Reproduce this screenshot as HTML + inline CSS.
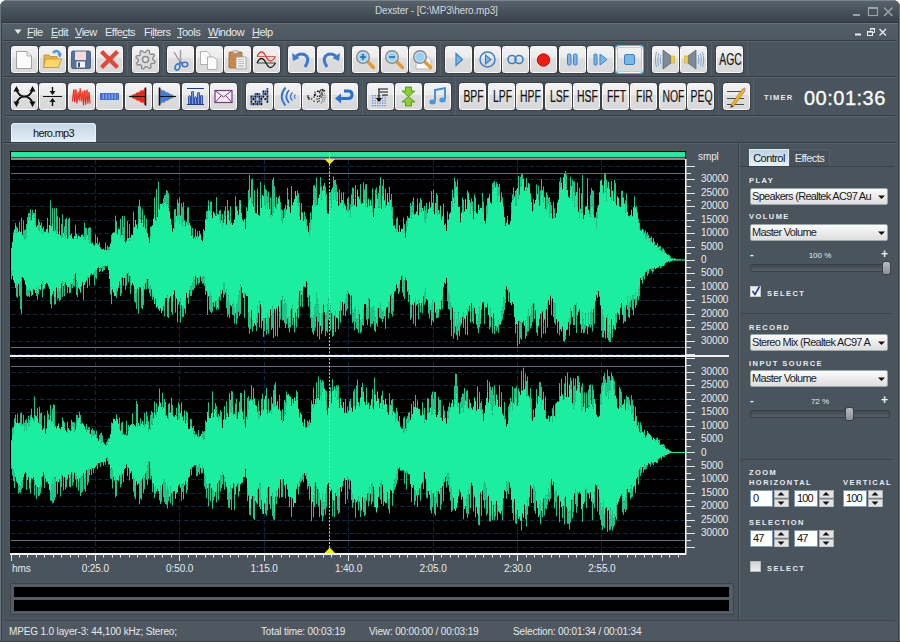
<!DOCTYPE html><html><head><meta charset="utf-8"><style>
*{margin:0;padding:0;box-sizing:border-box}
html,body{width:900px;height:642px;overflow:hidden;background:#fff}
body{position:relative;font-family:"Liberation Sans",sans-serif;}
.a{position:absolute}
#win{position:absolute;left:0;top:0;width:900px;height:642px;background:#4a545d;border-radius:7px 7px 0 0;overflow:hidden}
.title{left:0;top:0;width:900px;height:23px;background:linear-gradient(#7a848c 0px,#7a848c 1px,#57626b 1px,#48525a 50%,#3a434b);border-bottom:1px solid #2e353b}
.menu{left:0;top:23px;width:900px;height:18px;background:linear-gradient(#68727a 0px,#68727a 1px,#545e67 1px,#4d5760)}
.mi{position:absolute;top:25px;font-size:11px;color:#e4e8ec;line-height:14px;white-space:nowrap;letter-spacing:-0.5px}
.mi u{text-decoration:underline;text-underline-offset:1px}
.b{position:absolute;width:27px;height:27px;border-radius:2.5px;background:linear-gradient(#f2f2f2 0%,#ebebeb 45%,#dddddd 46%,#d9d9d9 100%);box-shadow:0 0 0 1px #394046;border:1px solid #fafafa}
.b svg{position:absolute;left:-1px;top:-1px}
.sep{position:absolute;width:1px;background:#3b4248;border-right:1px solid #566069}
.hl{position:absolute;height:2px;background:linear-gradient(#343b41 50%,#58626a 50%)}
.bt{position:absolute;left:-20px;top:0;width:67px;font-size:16px;color:#141414;-webkit-text-stroke:0.2px #141414;text-align:center;line-height:26px;transform:scaleX(0.65);white-space:nowrap}
.lbl{position:absolute;font-size:7.5px;font-weight:bold;color:#e8ecf0;letter-spacing:1.45px;line-height:10px}
.dd{position:absolute;height:17px;border-radius:2px;background:linear-gradient(#fcfcfc,#ececec 50%,#dedede);border:1px solid #9aa;font-size:11px;letter-spacing:-0.7px;color:#1a1a1a;line-height:15px;padding-left:1px;white-space:nowrap;overflow:hidden}
.sm{position:absolute;font-size:10px;letter-spacing:-0.1px;color:#e8eaec;line-height:12px;white-space:nowrap}
.st{position:absolute;top:625px;font-size:10px;letter-spacing:-0.15px;color:#e6e8ea;line-height:13px;white-space:nowrap}
</style></head><body><div id="win"><div class="a title"></div><div class="a" style="left:375px;top:4px;font-size:10px;letter-spacing:-0.17px;color:#d4d8dc;line-height:14px;white-space:nowrap">Dexster - [C:\MP3\hero.mp3]</div><div class="menu a"></div><svg class="a" style="left:850px;top:4px" width="46" height="16" viewBox="0 0 46 16"><rect x="3" y="10" width="7" height="2" fill="#9aa2a8"/><rect x="18.5" y="3.5" width="9" height="8" fill="none" stroke="#9aa2a8" stroke-width="1.2"/><rect x="18" y="3" width="10" height="2" fill="#9aa2a8"/><path d="M34 3.5 L42.5 12 M42.5 3.5 L34 12" stroke="#9aa2a8" stroke-width="1.6"/></svg><svg class="a" style="left:14px;top:29px" width="8" height="6"><path d="M0.5 0.5 H7.5 L4 5Z" fill="#e8ecf0"/></svg><div class="mi" style="left:27px"><u>F</u>ile</div><div class="mi" style="left:51px"><u>E</u>dit</div><div class="mi" style="left:75px"><u>V</u>iew</div><div class="mi" style="left:105px">Effe<u>c</u>ts</div><div class="mi" style="left:144px">Fi<u>l</u>ters</div><div class="mi" style="left:177px"><u>T</u>ools</div><div class="mi" style="left:208px"><u>W</u>indow</div><div class="mi" style="left:252px"><u>H</u>elp</div><svg class="a" style="left:850px;top:24px" width="46" height="16" viewBox="0 0 46 16"><rect x="5" y="9.5" width="6" height="2" fill="#e8ecf0"/><rect x="17.5" y="7.5" width="5" height="4" fill="none" stroke="#e8ecf0" stroke-width="1"/><rect x="17" y="7" width="6" height="1.6" fill="#e8ecf0"/><path d="M20.5 6.5 V4.5 H24.5 V8.5 H23" fill="none" stroke="#e8ecf0" stroke-width="1"/><rect x="20" y="4" width="5" height="1.5" fill="#e8ecf0"/><path d="M29.5 5 L36 11.5 M36 5 L29.5 11.5" stroke="#e8ecf0" stroke-width="1.3"/></svg><div class="hl" style="left:3px;top:40px;width:893px"></div><div class="hl" style="left:3px;top:76px;width:893px"></div><div class="hl" style="left:5px;top:115px;width:890px"></div><div class="b" style="left:11px;top:46px;"><svg width="27" height="27" viewBox="0 0 27 27"><path d="M5.5 5.5 H16 L20.5 10 V22.5 H5.5 Z" fill="#fbfbfb" stroke="#a0a0a0" stroke-width="1"/><path d="M16 5.5 V10 H20.5" fill="#e4e4e4" stroke="#a8a8a8" stroke-width="0.8"/></svg></div><div class="b" style="left:39px;top:46px;"><svg width="27" height="27" viewBox="0 0 27 27"><path d="M5 9 H10 L11.5 10.5 H18 V21 H5 Z" fill="#e8b44a" stroke="#b88a30" stroke-width="0.8"/><path d="M6.5 13 H22.5 L19.5 21.5 H4.5 Z" fill="#fbd76a" stroke="#c09038" stroke-width="0.8"/><path d="M14 7 Q18 2.5 21 8" fill="none" stroke="#4a98d8" stroke-width="2.6"/><path d="M18.5 8 L23 7.5 L21 12 Z" fill="#4a98d8"/></svg></div><div class="b" style="left:68px;top:46px;"><svg width="27" height="27" viewBox="0 0 27 27"><rect x="3.5" y="5" width="19" height="17.5" rx="1.5" fill="#52729a" stroke="#3a5478" stroke-width="0.8"/><rect x="7" y="5.5" width="11" height="8.5" fill="#f6dcd6"/><rect x="8.5" y="15.5" width="8.5" height="6" fill="#f4f4f4"/><rect x="10" y="16.5" width="2" height="4.5" fill="#3a5478"/></svg></div><div class="b" style="left:96px;top:46px;"><svg width="27" height="27" viewBox="0 0 27 27"><path d="M7 7 L20 20 M20 7 L7 20" stroke="#e2483a" stroke-width="4.2" stroke-linecap="square"/></svg></div><div class="b" style="left:132px;top:46px;"><svg width="27" height="27" viewBox="0 0 27 27"><polygon points="20.70,13.50 23.11,15.41 22.55,17.25 19.49,17.50 18.59,18.59 18.94,21.65 17.25,22.55 14.90,20.56 13.50,20.70 11.59,23.11 9.75,22.55 9.50,19.49 8.41,18.59 5.35,18.94 4.45,17.25 6.44,14.90 6.30,13.50 3.89,11.59 4.45,9.75 7.51,9.50 8.41,8.41 8.06,5.35 9.75,4.45 12.10,6.44 13.50,6.30 15.41,3.89 17.25,4.45 17.50,7.51 18.59,8.41 21.65,8.06 22.55,9.75 20.56,12.10" fill="#dcdcdc" stroke="#8c8c8c" stroke-width="1.3"/><circle cx="13.5" cy="13.5" r="3" fill="#e8e8e8" stroke="#8c8c8c" stroke-width="1.5"/></svg></div><div class="b" style="left:167px;top:46px;"><svg width="27" height="27" viewBox="0 0 27 27"><path d="M7 6 L15 19 M13.5 4 L13.5 18" stroke="#9a9a9a" stroke-width="1.4"/><ellipse cx="10.5" cy="21" rx="2.3" ry="3.2" fill="none" stroke="#3a78c8" stroke-width="1.6" transform="rotate(20 10.5 21)"/><ellipse cx="18" cy="18.5" rx="2.8" ry="2.2" fill="none" stroke="#3a78c8" stroke-width="1.6"/><path d="M13.5 16 L11.5 18.5 M14 16 L16 17.5" stroke="#3a78c8" stroke-width="1.6"/></svg></div><div class="b" style="left:196px;top:46px;"><svg width="27" height="27" viewBox="0 0 27 27"><path d="M4.5 5.5 H11 L14 8.5 V18.5 H4.5 Z" fill="#fafafa" stroke="#a8a8a8" stroke-width="0.9"/><path d="M11.5 11 H18 L21 14 V23.5 H11.5 Z" fill="#fafafa" stroke="#a8a8a8" stroke-width="0.9"/></svg></div><div class="b" style="left:224px;top:46px;"><svg width="27" height="27" viewBox="0 0 27 27"><rect x="5" y="6" width="13" height="16" rx="1" fill="#c88848" stroke="#9a6430" stroke-width="0.8"/><rect x="9" y="4.5" width="5" height="3" rx="1" fill="#d8d8d8" stroke="#909090" stroke-width="0.6"/><rect x="12" y="11" width="10" height="12" fill="#f4f4f4" stroke="#999" stroke-width="0.8"/><path d="M14 13.5 H20 M14 15.5 H20 M14 17.5 H20 M14 19.5 H20 M14 21 H20" stroke="#aaa" stroke-width="0.7"/></svg></div><div class="b" style="left:253px;top:46px;"><svg width="27" height="27" viewBox="0 0 27 27"><path d="M4 10.5 Q6.25 6 8.5 6 Q10.75 6 13 10.5 Q15.25 15 17.5 15 Q19.75 15 22.5 10.5" fill="none" stroke="#e83a2a" stroke-width="1.3"/><path d="M4 10.5 H22.5" stroke="#e83a2a" stroke-width="0.8"/><path d="M4 17 Q6.25 12.5 8.5 12.5 Q10.75 12.5 13 17 Q15.25 21.5 17.5 21.5 Q19.75 21.5 22.5 17" fill="none" stroke="#1a1a1a" stroke-width="1.3"/><path d="M4 17 H22.5" stroke="#1a1a1a" stroke-width="0.8"/></svg></div><div class="b" style="left:288px;top:46px;"><svg width="27" height="27" viewBox="0 0 27 27"><path d="M8 10 Q14 6 18.5 10 Q21.5 14 17 21" fill="none" stroke="#3a7ad0" stroke-width="3"/><path d="M4 7 L5 15 L11.5 12 Z" fill="#3a7ad0"/></svg></div><div class="b" style="left:317px;top:46px;"><svg width="27" height="27" viewBox="0 0 27 27"><path d="M19 10 Q13 6 8.5 10 Q5.5 14 10 21" fill="none" stroke="#3a7ad0" stroke-width="3"/><path d="M23 7 L22 15 L15.5 12 Z" fill="#3a7ad0"/></svg></div><div class="b" style="left:352px;top:46px;"><svg width="27" height="27" viewBox="0 0 27 27"><path d="M15.5 15.5 L21.5 21.5" stroke="#e89a28" stroke-width="3.2" stroke-linecap="round"/><circle cx="11" cy="11" r="6.3" fill="#bfe2f8" stroke="#8a8a8a" stroke-width="1.4"/><circle cx="11" cy="11" r="4.3" fill="#9ad0f2"/><path d="M8 11 H14 M11 8 V14" stroke="#2a68b0" stroke-width="1.6"/></svg></div><div class="b" style="left:381px;top:46px;"><svg width="27" height="27" viewBox="0 0 27 27"><path d="M15.5 15.5 L21.5 21.5" stroke="#e89a28" stroke-width="3.2" stroke-linecap="round"/><circle cx="11" cy="11" r="6.3" fill="#bfe2f8" stroke="#8a8a8a" stroke-width="1.4"/><circle cx="11" cy="11" r="4.3" fill="#9ad0f2"/><path d="M8 11 H14" stroke="#2a68b0" stroke-width="1.6"/></svg></div><div class="b" style="left:409px;top:46px;"><svg width="27" height="27" viewBox="0 0 27 27"><path d="M7 11 H19 L22 14 V23 H7 Z" fill="#f8f8f8" stroke="#aaa" stroke-width="0.8"/><path d="M15.5 15.5 L21.5 21.5" stroke="#e89a28" stroke-width="3.2" stroke-linecap="round"/><circle cx="11" cy="11" r="6.3" fill="#bfe2f8" stroke="#8a8a8a" stroke-width="1.4"/><circle cx="11" cy="11" r="4.3" fill="#9ad0f2"/></svg></div><div class="b" style="left:445px;top:46px;"><svg width="27" height="27" viewBox="0 0 27 27"><path d="M11 7.5 L17.5 13.5 L11 19.5 Z" fill="#7ab8ec" stroke="#3a80c8" stroke-width="1.2"/></svg></div><div class="b" style="left:474px;top:46px;"><svg width="27" height="27" viewBox="0 0 27 27"><circle cx="13.5" cy="13.5" r="7.5" fill="none" stroke="#3a80c8" stroke-width="1.5"/><path d="M11.5 9 L17 13.5 L11.5 18 Z" fill="#7ab8ec" stroke="#3a80c8" stroke-width="1.1"/></svg></div><div class="b" style="left:502px;top:46px;"><svg width="27" height="27" viewBox="0 0 27 27"><circle cx="10" cy="13.5" r="4" fill="none" stroke="#3a80c8" stroke-width="1.6"/><circle cx="17" cy="13.5" r="4" fill="none" stroke="#3a80c8" stroke-width="1.6"/></svg></div><div class="b" style="left:530px;top:46px;"><svg width="27" height="27" viewBox="0 0 27 27"><circle cx="13.5" cy="14" r="6.2" fill="#f01c10" stroke="#b80808" stroke-width="0.9"/></svg></div><div class="b" style="left:559px;top:46px;"><svg width="27" height="27" viewBox="0 0 27 27"><rect x="8.5" y="8" width="3.5" height="11" rx="1.2" fill="#7ab8ec" stroke="#3a80c8" stroke-width="1"/><rect x="14.5" y="8" width="3.5" height="11" rx="1.2" fill="#7ab8ec" stroke="#3a80c8" stroke-width="1"/></svg></div><div class="b" style="left:587px;top:46px;"><svg width="27" height="27" viewBox="0 0 27 27"><rect x="7" y="8" width="3" height="11" rx="1" fill="#7ab8ec" stroke="#3a80c8" stroke-width="1"/><path d="M13 8 L20 13.5 L13 19 Z" fill="#7ab8ec" stroke="#3a80c8" stroke-width="1"/></svg></div><div class="b" style="left:616px;top:46px;box-shadow:0 0 0 1px #49b8f0,inset 0 0 0 1px #9ad8f8"><svg width="27" height="27" viewBox="0 0 27 27"><rect x="8.5" y="8.5" width="10" height="10" rx="1.5" fill="#7ab8ec" stroke="#3a80c8" stroke-width="1"/></svg></div><div class="b" style="left:652px;top:46px;"><svg width="27" height="27" viewBox="0 0 27 27"><path d="M11 4 V23 L19 17 V10 Z" fill="#7a8a98" stroke="#55636e" stroke-width="0.7"/><rect x="19" y="10" width="3.5" height="7" fill="#f0d040" stroke="#c0a020" stroke-width="0.5"/><path d="M9 9 Q7.5 13.5 9 18 M6.8 7.5 Q4.8 13.5 6.8 19.5 M4.6 6 Q2.2 13.5 4.6 21" fill="none" stroke="#4a88c8" stroke-width="1" stroke-dasharray="1.3 0.5"/></svg></div><div class="b" style="left:680px;top:46px;"><svg width="27" height="27" viewBox="0 0 27 27"><path d="M16 4 V23 L8 17 V10 Z" fill="#7a8a98" stroke="#55636e" stroke-width="0.7"/><rect x="4.5" y="10" width="3.5" height="7" fill="#f0d040" stroke="#c0a020" stroke-width="0.5"/><path d="M18 9 Q19.5 13.5 18 18 M20.2 7.5 Q22.2 13.5 20.2 19.5 M22.4 6 Q24.8 13.5 22.4 21" fill="none" stroke="#4a88c8" stroke-width="1" stroke-dasharray="1.3 0.5"/></svg></div><div class="b" style="left:716px;top:46px;"><div class="bt">AGC</div></div><div class="sep" style="left:127px;top:42px;height:34px"></div><div class="sep" style="left:163px;top:42px;height:34px"></div><div class="sep" style="left:284px;top:42px;height:34px"></div><div class="sep" style="left:348px;top:42px;height:34px"></div><div class="sep" style="left:440px;top:42px;height:34px"></div><div class="sep" style="left:647px;top:42px;height:34px"></div><div class="sep" style="left:711px;top:42px;height:34px"></div><div class="sep" style="left:747px;top:42px;height:34px"></div><div class="b" style="left:11px;top:83px;"><svg width="27" height="27" viewBox="0 0 27 27"><path d="M5.5 7 C8.5 15.5 18.5 15.5 21.5 7 M5.5 20 C8.5 11.5 18.5 11.5 21.5 20" fill="none" stroke="#111" stroke-width="1.9"/><path d="M5.5 3 L2.5 8.5 H8.5Z M21.5 3 L18.5 8.5 H24.5Z M5.5 24 L2.5 18.5 H8.5Z M21.5 24 L18.5 18.5 H24.5Z" fill="#111"/></svg></div><div class="b" style="left:39px;top:83px;"><svg width="27" height="27" viewBox="0 0 27 27"><path d="M4 13.5 H23" stroke="#111" stroke-width="1.2"/><path d="M13.5 4 V11 M13.5 16 V23" stroke="#111" stroke-width="1.4"/><path d="M10.5 8 L16.5 8 L13.5 12Z M10.5 19 L16.5 19 L13.5 15Z" fill="#111"/></svg></div><div class="b" style="left:68px;top:83px;"><svg width="27" height="27" viewBox="0 0 27 27"><polyline points="4.5,18.4 5.6,7.0 6.7,19.1 7.8,6.6 8.9,20.5 10.0,9.5 11.1,17.2 12.2,5.4 13.3,18.5 14.4,8.6 15.5,22.5 16.6,7.4 17.7,21.6 18.8,7.3 19.9,20.6 21.0,9.1 22.1,20.5" fill="none" stroke="#e02a20" stroke-width="1.1"/><polyline points="5.0,15.2 6.1,6.1 7.2,14.9 8.3,7.1 9.4,14.7 10.5,8.7 11.6,18.0 12.7,8.8 13.8,16.7 14.9,7.9 16.0,16.0 17.1,7.8 18.2,15.1 19.3,6.6 20.4,14.7 21.5,8.8" fill="none" stroke="#f04a30" stroke-width="0.7"/></svg></div><div class="b" style="left:96px;top:83px;"><svg width="27" height="27" viewBox="0 0 27 27"><rect x="4.5" y="10.5" width="18" height="6" fill="#a8c4f0" stroke="#2a5ac8" stroke-width="0.8"/><rect x="5.0" y="11" width="0.8" height="5" fill="#1a50c0"/><rect x="6.5" y="11" width="0.8" height="5" fill="#1a50c0"/><rect x="8.0" y="11" width="0.8" height="5" fill="#1a50c0"/><rect x="9.5" y="11" width="0.8" height="5" fill="#1a50c0"/><rect x="11.0" y="11" width="0.8" height="5" fill="#1a50c0"/><rect x="12.5" y="11" width="0.8" height="5" fill="#1a50c0"/><rect x="14.0" y="11" width="0.8" height="5" fill="#1a50c0"/><rect x="15.5" y="11" width="0.8" height="5" fill="#1a50c0"/><rect x="17.0" y="11" width="0.8" height="5" fill="#1a50c0"/><rect x="18.5" y="11" width="0.8" height="5" fill="#1a50c0"/><rect x="20.0" y="11" width="0.8" height="5" fill="#1a50c0"/><rect x="21.5" y="11" width="0.8" height="5" fill="#1a50c0"/></svg></div><div class="b" style="left:125px;top:83px;"><svg width="27" height="27" viewBox="0 0 27 27"><polygon points="4.0,13.5 6.0,12.7 8.0,11.4 10.0,11.0 12.0,9.2 14.0,9.3 16.0,7.1 18.0,7.6 20.0,5.0 20.0,22.0 18.0,19.4 16.0,19.9 14.0,17.7 12.0,17.8 10.0,16.0 8.0,15.6 6.0,14.3 4.0,13.5" fill="#e8281c" stroke="#f0a080" stroke-width="0.5"/><path d="M20.5 4.5 V22.5" stroke="#111" stroke-width="1.6"/><path d="M4 13.5 H21" stroke="#111" stroke-width="1"/></svg></div><div class="b" style="left:153px;top:83px;"><svg width="27" height="27" viewBox="0 0 27 27"><polygon points="23.0,13.5 21.0,12.7 19.0,11.4 17.0,11.0 15.0,9.2 13.0,9.3 11.0,7.1 9.0,7.6 7.0,5.0 7.0,22.0 9.0,19.4 11.0,19.9 13.0,17.7 15.0,17.8 17.0,16.0 19.0,15.6 21.0,14.3 23.0,13.5" fill="#3a7ee8" stroke="#f0a070" stroke-width="0.5"/><path d="M6.5 4.5 V22.5" stroke="#111" stroke-width="1.6"/><path d="M6 13.5 H23" stroke="#111" stroke-width="1"/></svg></div><div class="b" style="left:182px;top:83px;"><svg width="27" height="27" viewBox="0 0 27 27"><path d="M5 5.5 H22 M5 21.5 H22" stroke="#1a3a90" stroke-width="1.1"/><path d="M6.5 21 V14 Q7.5 11 8.5 14 V21 M9.5 21 V9 Q10.5 7 11.5 9 V21 M12.5 21 V15 Q13.5 12 14.5 15 V21 M15.5 21 V10 Q16.5 8 17.5 10 V21 M18.5 21 V13 Q19.5 11 20.5 13 V21" fill="#7a9ae0" stroke="#2a4aa8" stroke-width="0.9"/></svg></div><div class="b" style="left:210px;top:83px;"><svg width="27" height="27" viewBox="0 0 27 27"><rect x="5" y="7.5" width="17" height="12" fill="#f4eef4" stroke="#7a3a80" stroke-width="1.2"/><path d="M5 7.5 L13.5 14 L22 7.5 M5 19.5 L11 13 M22 19.5 L16 13" fill="none" stroke="#7a3a80" stroke-width="1"/></svg></div><div class="b" style="left:246px;top:83px;"><svg width="27" height="27" viewBox="0 0 27 27"><rect x="4.5" y="12.5" width="1.8" height="2.2" fill="#141414"/><rect x="4.5" y="15.0" width="1.8" height="2.2" fill="#2a60c8"/><rect x="4.5" y="17.5" width="1.8" height="2.2" fill="#141414"/><rect x="4.5" y="20.0" width="1.8" height="2.2" fill="#2a60c8"/><rect x="6.5" y="12.5" width="1.8" height="2.2" fill="#2a60c8"/><rect x="6.5" y="15.0" width="1.8" height="2.2" fill="#141414"/><rect x="6.5" y="20.0" width="1.8" height="2.2" fill="#141414"/><rect x="8.5" y="10.0" width="1.8" height="2.2" fill="#2a60c8"/><rect x="8.5" y="12.5" width="1.8" height="2.2" fill="#141414"/><rect x="8.5" y="15.0" width="1.8" height="2.2" fill="#2a60c8"/><rect x="8.5" y="17.5" width="1.8" height="2.2" fill="#141414"/><rect x="8.5" y="20.0" width="1.8" height="2.2" fill="#2a60c8"/><rect x="10.5" y="10.0" width="1.8" height="2.2" fill="#141414"/><rect x="10.5" y="12.5" width="1.8" height="2.2" fill="#2a60c8"/><rect x="10.5" y="17.5" width="1.8" height="2.2" fill="#2a60c8"/><rect x="10.5" y="20.0" width="1.8" height="2.2" fill="#141414"/><rect x="12.5" y="10.0" width="1.8" height="2.2" fill="#2a60c8"/><rect x="12.5" y="12.5" width="1.8" height="2.2" fill="#141414"/><rect x="12.5" y="15.0" width="1.8" height="2.2" fill="#2a60c8"/><rect x="12.5" y="17.5" width="1.8" height="2.2" fill="#141414"/><rect x="12.5" y="20.0" width="1.8" height="2.2" fill="#2a60c8"/><rect x="14.5" y="12.5" width="1.8" height="2.2" fill="#2a60c8"/><rect x="14.5" y="15.0" width="1.8" height="2.2" fill="#141414"/><rect x="14.5" y="17.5" width="1.8" height="2.2" fill="#2a60c8"/><rect x="14.5" y="20.0" width="1.8" height="2.2" fill="#141414"/><rect x="16.5" y="7.5" width="1.8" height="2.2" fill="#141414"/><rect x="16.5" y="10.0" width="1.8" height="2.2" fill="#2a60c8"/><rect x="16.5" y="12.5" width="1.8" height="2.2" fill="#141414"/><rect x="18.5" y="7.5" width="1.8" height="2.2" fill="#2a60c8"/><rect x="18.5" y="10.0" width="1.8" height="2.2" fill="#141414"/><rect x="18.5" y="15.0" width="1.8" height="2.2" fill="#141414"/><rect x="20.5" y="5.0" width="1.8" height="2.2" fill="#2a60c8"/><rect x="20.5" y="7.5" width="1.8" height="2.2" fill="#141414"/><rect x="20.5" y="10.0" width="1.8" height="2.2" fill="#2a60c8"/><rect x="20.5" y="12.5" width="1.8" height="2.2" fill="#141414"/><rect x="20.5" y="15.0" width="1.8" height="2.2" fill="#2a60c8"/><rect x="20.5" y="17.5" width="1.8" height="2.2" fill="#141414"/></svg></div><div class="b" style="left:274px;top:83px;"><svg width="27" height="27" viewBox="0 0 27 27"><path d="M11.5 4.5 Q4 13.5 11.5 22.5" fill="none" stroke="#3a78d0" stroke-width="2"/><path d="M15 7 Q9.5 13.5 15 20" fill="none" stroke="#3a78d0" stroke-width="1.7"/><path d="M18.5 9.5 Q14.5 13.5 18.5 17.5" fill="none" stroke="#3a78d0" stroke-width="1.4"/><path d="M21.5 11.5 Q19 13.5 21.5 15.5" fill="none" stroke="#3a78d0" stroke-width="1.1"/></svg></div><div class="b" style="left:302px;top:83px;"><svg width="27" height="27" viewBox="0 0 27 27"><rect x="12.9" y="11.3" width="1.2" height="1.2" fill="#111"/><rect x="5.1" y="13.5" width="1.2" height="1.2" fill="#111"/><rect x="20.3" y="6.4" width="1.2" height="1.2" fill="#111"/><rect x="14.4" y="15.5" width="1.2" height="1.2" fill="#111"/><rect x="17.0" y="12.7" width="1.2" height="1.2" fill="#111"/><rect x="17.3" y="7.7" width="1.2" height="1.2" fill="#111"/><rect x="15.0" y="18.2" width="1.2" height="1.2" fill="#111"/><rect x="11.5" y="17.7" width="1.2" height="1.2" fill="#111"/><rect x="16.5" y="17.3" width="1.2" height="1.2" fill="#111"/><rect x="19.9" y="5.9" width="1.2" height="1.2" fill="#111"/><rect x="11.4" y="13.4" width="1.2" height="1.2" fill="#111"/><rect x="5.4" y="12.2" width="1.2" height="1.2" fill="#111"/><rect x="20.4" y="6.9" width="1.2" height="1.2" fill="#111"/><rect x="6.4" y="14.2" width="1.2" height="1.2" fill="#111"/><rect x="12.1" y="11.8" width="1.2" height="1.2" fill="#111"/><rect x="14.9" y="7.9" width="1.2" height="1.2" fill="#111"/><rect x="5.9" y="14.4" width="1.2" height="1.2" fill="#111"/><rect x="15.3" y="7.5" width="1.2" height="1.2" fill="#111"/><rect x="22.0" y="7.1" width="1.2" height="1.2" fill="#111"/><rect x="9.0" y="15.4" width="1.2" height="1.2" fill="#111"/><rect x="16.5" y="15.0" width="1.2" height="1.2" fill="#111"/><rect x="18.2" y="6.5" width="1.2" height="1.2" fill="#111"/><rect x="14.9" y="12.7" width="1.2" height="1.2" fill="#111"/><rect x="18.6" y="10.6" width="1.2" height="1.2" fill="#111"/><rect x="12.4" y="8.6" width="1.2" height="1.2" fill="#111"/><rect x="12.5" y="10.5" width="1.2" height="1.2" fill="#111"/><rect x="6.5" y="15.7" width="1.2" height="1.2" fill="#111"/><rect x="18.7" y="13.5" width="1.2" height="1.2" fill="#111"/><rect x="17.1" y="9.2" width="1.2" height="1.2" fill="#111"/><rect x="17.5" y="12.2" width="1.2" height="1.2" fill="#111"/><rect x="11.8" y="11.3" width="1.2" height="1.2" fill="#111"/><rect x="19.6" y="11.3" width="1.2" height="1.2" fill="#111"/><rect x="16.3" y="7.9" width="1.2" height="1.2" fill="#111"/><rect x="19.3" y="9.4" width="1.2" height="1.2" fill="#111"/><path d="M19 6 Q23 13.5 19 21 M21.5 8 Q24.5 13.5 21.5 19" fill="none" stroke="#222" stroke-width="0.8" stroke-dasharray="1 1"/></svg></div><div class="b" style="left:331px;top:83px;"><svg width="27" height="27" viewBox="0 0 27 27"><path d="M9 15.5 H17 Q21 15.5 21 11.5 Q21 8 17 8 H13" fill="none" stroke="#2a70d0" stroke-width="3"/><path d="M4 15.5 L10 10.5 V20.5 Z" fill="#2a70d0"/></svg></div><div class="b" style="left:367px;top:83px;"><svg width="27" height="27" viewBox="0 0 27 27"><rect x="5.0" y="12.0" width="1.3" height="1.3" fill="#6a8ad0"/><rect x="5.0" y="14.5" width="1.3" height="1.3" fill="#6a8ad0"/><rect x="5.0" y="17.0" width="1.3" height="1.3" fill="#6a8ad0"/><rect x="5.0" y="19.5" width="1.3" height="1.3" fill="#6a8ad0"/><rect x="5.0" y="22.0" width="1.3" height="1.3" fill="#6a8ad0"/><rect x="7.5" y="12.0" width="1.3" height="1.3" fill="#6a8ad0"/><rect x="7.5" y="14.5" width="1.3" height="1.3" fill="#6a8ad0"/><rect x="7.5" y="17.0" width="1.3" height="1.3" fill="#6a8ad0"/><rect x="7.5" y="19.5" width="1.3" height="1.3" fill="#6a8ad0"/><rect x="7.5" y="22.0" width="1.3" height="1.3" fill="#6a8ad0"/><rect x="10.0" y="12.0" width="1.3" height="1.3" fill="#6a8ad0"/><rect x="10.0" y="14.5" width="1.3" height="1.3" fill="#6a8ad0"/><rect x="10.0" y="17.0" width="1.3" height="1.3" fill="#6a8ad0"/><rect x="10.0" y="19.5" width="1.3" height="1.3" fill="#6a8ad0"/><rect x="10.0" y="22.0" width="1.3" height="1.3" fill="#6a8ad0"/><rect x="12.5" y="12.0" width="1.3" height="1.3" fill="#6a8ad0"/><rect x="12.5" y="14.5" width="1.3" height="1.3" fill="#6a8ad0"/><rect x="12.5" y="17.0" width="1.3" height="1.3" fill="#6a8ad0"/><rect x="12.5" y="19.5" width="1.3" height="1.3" fill="#6a8ad0"/><rect x="12.5" y="22.0" width="1.3" height="1.3" fill="#6a8ad0"/><rect x="15.0" y="12.0" width="1.3" height="1.3" fill="#6a8ad0"/><rect x="15.0" y="14.5" width="1.3" height="1.3" fill="#6a8ad0"/><rect x="15.0" y="17.0" width="1.3" height="1.3" fill="#6a8ad0"/><rect x="15.0" y="19.5" width="1.3" height="1.3" fill="#6a8ad0"/><rect x="15.0" y="22.0" width="1.3" height="1.3" fill="#6a8ad0"/><rect x="17.5" y="12.0" width="1.3" height="1.3" fill="#6a8ad0"/><rect x="17.5" y="14.5" width="1.3" height="1.3" fill="#6a8ad0"/><rect x="17.5" y="17.0" width="1.3" height="1.3" fill="#6a8ad0"/><rect x="17.5" y="19.5" width="1.3" height="1.3" fill="#6a8ad0"/><rect x="17.5" y="22.0" width="1.3" height="1.3" fill="#6a8ad0"/><path d="M11 6 H21 M13 9 H21 M15 12 H21 M12 6 V16" stroke="#111" stroke-width="1.2"/><path d="M9 15 L15 15 L12 19Z" fill="#111"/></svg></div><div class="b" style="left:395px;top:83px;"><svg width="27" height="27" viewBox="0 0 27 27"><path d="M10.5 4 H16.5 V8 H20 L13.5 13.5 L7 8 H10.5Z M10.5 23 H16.5 V19 H20 L13.5 13.5 L7 19 H10.5Z" fill="#8ad030" stroke="#4a8a10" stroke-width="0.8"/></svg></div><div class="b" style="left:424px;top:83px;"><svg width="27" height="27" viewBox="0 0 27 27"><path d="M11 18 V7 L21 5 V16" fill="none" stroke="#3a88d8" stroke-width="1.8"/><ellipse cx="8.5" cy="19" rx="3.2" ry="2.5" fill="#4a98e0"/><ellipse cx="18.5" cy="17" rx="3.2" ry="2.5" fill="#4a98e0"/></svg></div><div class="b" style="left:459px;top:83px;"><div class="bt">BPF</div></div><div class="b" style="left:488px;top:83px;"><div class="bt">LPF</div></div><div class="b" style="left:516px;top:83px;"><div class="bt">HPF</div></div><div class="b" style="left:545px;top:83px;"><div class="bt">LSF</div></div><div class="b" style="left:573px;top:83px;"><div class="bt">HSF</div></div><div class="b" style="left:602px;top:83px;"><div class="bt">FFT</div></div><div class="b" style="left:630px;top:83px;"><div class="bt">FIR</div></div><div class="b" style="left:659px;top:83px;"><div class="bt">NOF</div></div><div class="b" style="left:687px;top:83px;"><div class="bt">PEQ</div></div><div class="b" style="left:723px;top:83px;"><svg width="27" height="27" viewBox="0 0 27 27"><path d="M4 8.5 H21 M4 15.5 H21 M4 21.5 H21" stroke="#383838" stroke-width="0.9"/><path d="M8 22 L19.5 6 L22 7.8 L10.5 23.5 Z" fill="#f0b428" stroke="#a06a10" stroke-width="0.6"/><path d="M8 22 L10.5 23.5 L7.5 25Z" fill="#333"/><path d="M19.5 6 L22 7.8 L23 5.5 L21 4.2Z" fill="#d88ab0"/></svg></div><div class="sep" style="left:241px;top:78px;height:37px"></div><div class="sep" style="left:362px;top:78px;height:37px"></div><div class="sep" style="left:455px;top:78px;height:37px"></div><div class="sep" style="left:718px;top:78px;height:37px"></div><div class="sep" style="left:753px;top:78px;height:37px"></div><div class="a" style="left:764px;top:93px;font-size:7.5px;font-weight:bold;letter-spacing:1.2px;color:#e8ecf0;line-height:10px">TIMER</div><div class="a" style="left:804px;top:87px;font-size:20px;letter-spacing:0.5px;-webkit-text-stroke:0.35px #fbfbf6;color:#fbfbf6;line-height:22px">00:01:36</div><div class="a" style="left:11px;top:123px;width:85px;height:20px;border-radius:4px 4px 0 0;background:linear-gradient(#c4d6e4,#d4e2ee 50%,#e6f0f8);box-shadow:inset 0 0 0 1px #e8f0f6"></div><div class="a" style="left:11px;top:126px;width:85px;text-align:center;font-size:11px;letter-spacing:-0.7px;color:#111;line-height:14px">hero.mp3</div><div class="hl" style="left:3px;top:142px;width:893px"></div><div class="a" style="left:738px;top:143px;width:1px;height:477px;background:#3b4248"></div><div class="a" style="left:739px;top:143px;width:1px;height:477px;background:#566069"></div><div class="a" style="left:10px;top:151px;width:676px;height:403px;background:#000"></div><div class="a" style="left:11px;top:152px;width:674px;height:5px;background:linear-gradient(#1ee49a,#22f0a4 50%,#1ee09a)"></div><div class="a" style="left:11px;top:157px;width:674px;height:1px;background:#0c5a3c"></div><div class="a" style="left:11px;top:158px;width:674px;height:2px;background:linear-gradient(#9a8c94,#8a8088)"></div><div class="a" style="left:329px;top:152px;width:1px;height:7px;background:#c8e020"></div><svg class="a" style="left:0;top:0" width="900" height="642" viewBox="0 0 900 642"><defs><clipPath id="wc"><rect x="11" y="160" width="674" height="393"/></clipPath></defs><g clip-path="url(#wc)"><path d="M11 166.5 H685 M11 179.5 H685 M11 193.5 H685 M11 206.5 H685 M11 220.5 H685 M11 233.5 H685 M11 247.5 H685 M11 260.5 H685 M11 273.5 H685 M11 287.5 H685 M11 300.5 H685 M11 314.5 H685 M11 327.5 H685 M11 341.5 H685 M11 354.5 H685 M11 358.5 H685 M11 372.5 H685 M11 385.5 H685 M11 399.5 H685 M11 412.5 H685 M11 426.5 H685 M11 439.5 H685 M11 452.5 H685 M11 466.5 H685 M11 479.5 H685 M11 493.5 H685 M11 506.5 H685 M11 520.5 H685 M11 533.5 H685 M11 547.5 H685 M95.5 160 V553 M179.5 160 V553 M264.5 160 V553 M348.5 160 V553 M433.5 160 V553 M517.5 160 V553 M601.5 160 V553" stroke="#0c2844" stroke-width="1" stroke-dasharray="4.6 2.6" fill="none"/><path d="M11 260.0 L11 248.1 L12 248.1 L12 242.0 L13 242.0 L13 234.9 L14 234.9 L14 229.6 L15 229.6 L15 224.7 L16 224.7 L16 232.8 L17 232.8 L17 228.1 L18 228.1 L18 231.7 L19 231.7 L19 230.3 L20 230.3 L20 231.9 L21 231.9 L21 231.1 L22 231.1 L22 234.7 L23 234.7 L23 236.8 L24 236.8 L24 238.8 L25 238.8 L25 238.8 L26 238.8 L26 236.6 L27 236.6 L27 225.1 L28 225.1 L28 219.9 L29 219.9 L29 216.7 L30 216.7 L30 220.6 L31 220.6 L31 220.1 L32 220.1 L32 214.7 L33 214.7 L33 213.2 L34 213.2 L34 217.7 L35 217.7 L35 224.3 L36 224.3 L36 226.7 L37 226.7 L37 225.2 L38 225.2 L38 229.9 L39 229.9 L39 230.4 L40 230.4 L40 225.3 L41 225.3 L41 233.2 L42 233.2 L42 228.5 L43 228.5 L43 234.0 L44 234.0 L44 231.5 L45 231.5 L45 231.8 L46 231.8 L46 229.0 L47 229.0 L47 229.0 L48 229.0 L48 232.6 L49 232.6 L49 225.1 L50 225.1 L50 224.4 L51 224.4 L51 226.2 L52 226.2 L52 223.1 L53 223.1 L53 231.1 L54 231.1 L54 232.1 L55 232.1 L55 230.3 L56 230.3 L56 233.5 L57 233.5 L57 230.7 L58 230.7 L58 234.3 L59 234.3 L59 229.4 L60 229.4 L60 235.3 L61 235.3 L61 237.7 L62 237.7 L62 236.7 L63 236.7 L63 232.8 L64 232.8 L64 236.1 L65 236.1 L65 237.5 L66 237.5 L66 234.8 L67 234.8 L67 239.1 L68 239.1 L68 236.5 L69 236.5 L69 235.1 L70 235.1 L70 235.3 L71 235.3 L71 233.8 L72 233.8 L72 238.2 L73 238.2 L73 238.7 L74 238.7 L74 236.1 L75 236.1 L75 235.5 L76 235.5 L76 233.9 L77 233.9 L77 238.7 L78 238.7 L78 235.2 L79 235.2 L79 236.2 L80 236.2 L80 236.9 L81 236.9 L81 234.8 L82 234.8 L82 234.4 L83 234.4 L83 236.4 L84 236.4 L84 240.1 L85 240.1 L85 240.0 L86 240.0 L86 235.6 L87 235.6 L87 234.7 L88 234.7 L88 240.0 L89 240.0 L89 242.7 L90 242.7 L90 241.1 L91 241.1 L91 243.6 L92 243.6 L92 242.7 L93 242.7 L93 244.7 L94 244.7 L94 245.4 L95 245.4 L95 243.2 L96 243.2 L96 243.3 L97 243.3 L97 244.6 L98 244.6 L98 244.2 L99 244.2 L99 246.7 L100 246.7 L100 247.6 L101 247.6 L101 248.9 L102 248.9 L102 249.6 L103 249.6 L103 248.7 L104 248.7 L104 249.7 L105 249.7 L105 246.7 L106 246.7 L106 250.2 L107 250.2 L107 249.1 L108 249.1 L108 249.7 L109 249.7 L109 249.6 L110 249.6 L110 243.5 L111 243.5 L111 241.6 L112 241.6 L112 233.3 L113 233.3 L113 232.3 L114 232.3 L114 232.5 L115 232.5 L115 229.1 L116 229.1 L116 233.1 L117 233.1 L117 234.5 L118 234.5 L118 228.6 L119 228.6 L119 229.2 L120 229.2 L120 236.8 L121 236.8 L121 234.7 L122 234.7 L122 234.8 L123 234.8 L123 238.0 L124 238.0 L124 240.4 L125 240.4 L125 242.4 L126 242.4 L126 240.8 L127 240.8 L127 237.5 L128 237.5 L128 238.1 L129 238.1 L129 240.7 L130 240.7 L130 237.4 L131 237.4 L131 234.5 L132 234.5 L132 235.1 L133 235.1 L133 230.1 L134 230.1 L134 227.1 L135 227.1 L135 220.0 L136 220.0 L136 224.5 L137 224.5 L137 228.7 L138 228.7 L138 223.1 L139 223.1 L139 218.8 L140 218.8 L140 218.4 L141 218.4 L141 223.1 L142 223.1 L142 219.6 L143 219.6 L143 226.8 L144 226.8 L144 226.1 L145 226.1 L145 228.5 L146 228.5 L146 232.0 L147 232.0 L147 233.3 L148 233.3 L148 237.2 L149 237.2 L149 242.8 L150 242.8 L150 237.1 L151 237.1 L151 226.4 L152 226.4 L152 225.3 L153 225.3 L153 218.5 L154 218.5 L154 213.7 L155 213.7 L155 219.7 L156 219.7 L156 220.4 L157 220.4 L157 216.9 L158 216.9 L158 206.9 L159 206.9 L159 209.6 L160 209.6 L160 204.0 L161 204.0 L161 204.1 L162 204.1 L162 203.2 L163 203.2 L163 205.5 L164 205.5 L164 202.8 L165 202.8 L165 202.1 L166 202.1 L166 204.9 L167 204.9 L167 203.4 L168 203.4 L168 207.7 L169 207.7 L169 211.3 L170 211.3 L170 218.5 L171 218.5 L171 224.4 L172 224.4 L172 231.5 L173 231.5 L173 228.0 L174 228.0 L174 228.4 L175 228.4 L175 221.5 L176 221.5 L176 216.0 L177 216.0 L177 221.1 L178 221.1 L178 214.4 L179 214.4 L179 223.3 L180 223.3 L180 215.6 L181 215.6 L181 224.0 L182 224.0 L182 225.7 L183 225.7 L183 221.9 L184 221.9 L184 220.6 L185 220.6 L185 226.3 L186 226.3 L186 221.7 L187 221.7 L187 223.7 L188 223.7 L188 224.7 L189 224.7 L189 222.9 L190 222.9 L190 225.6 L191 225.6 L191 235.4 L192 235.4 L192 234.4 L193 234.4 L193 238.4 L194 238.4 L194 237.2 L195 237.2 L195 238.6 L196 238.6 L196 236.2 L197 236.2 L197 238.8 L198 238.8 L198 236.4 L199 236.4 L199 235.1 L200 235.1 L200 234.3 L201 234.3 L201 239.8 L202 239.8 L202 241.3 L203 241.3 L203 238.2 L204 238.2 L204 230.8 L205 230.8 L205 218.9 L206 218.9 L206 219.7 L207 219.7 L207 218.2 L208 218.2 L208 204.4 L209 204.4 L209 210.6 L210 210.6 L210 211.1 L211 211.1 L211 214.9 L212 214.9 L212 218.1 L213 218.1 L213 211.8 L214 211.8 L214 213.3 L215 213.3 L215 215.8 L216 215.8 L216 215.7 L217 215.7 L217 213.7 L218 213.7 L218 214.2 L219 214.2 L219 220.3 L220 220.3 L220 222.5 L221 222.5 L221 220.2 L222 220.2 L222 226.8 L223 226.8 L223 222.8 L224 222.8 L224 218.4 L225 218.4 L225 215.9 L226 215.9 L226 224.6 L227 224.6 L227 213.8 L228 213.8 L228 210.5 L229 210.5 L229 220.4 L230 220.4 L230 223.3 L231 223.3 L231 222.5 L232 222.5 L232 224.9 L233 224.9 L233 222.9 L234 222.9 L234 219.6 L235 219.6 L235 205.4 L236 205.4 L236 206.3 L237 206.3 L237 210.6 L238 210.6 L238 214.8 L239 214.8 L239 208.6 L240 208.6 L240 203.3 L241 203.3 L241 212.7 L242 212.7 L242 219.5 L243 219.5 L243 221.6 L244 221.6 L244 219.0 L245 219.0 L245 228.8 L246 228.8 L246 216.4 L247 216.4 L247 211.1 L248 211.1 L248 203.0 L249 203.0 L249 199.8 L250 199.8 L250 197.4 L251 197.4 L251 201.7 L252 201.7 L252 203.7 L253 203.7 L253 206.3 L254 206.3 L254 209.5 L255 209.5 L255 212.9 L256 212.9 L256 213.3 L257 213.3 L257 201.2 L258 201.2 L258 215.0 L259 215.0 L259 215.7 L260 215.7 L260 199.0 L261 199.0 L261 208.1 L262 208.1 L262 195.0 L263 195.0 L263 196.3 L264 196.3 L264 204.6 L265 204.6 L265 208.7 L266 208.7 L266 202.6 L267 202.6 L267 208.6 L268 208.6 L268 201.2 L269 201.2 L269 208.9 L270 208.9 L270 217.3 L271 217.3 L271 214.8 L272 214.8 L272 215.8 L273 215.8 L273 212.5 L274 212.5 L274 206.1 L275 206.1 L275 207.8 L276 207.8 L276 208.6 L277 208.6 L277 203.8 L278 203.8 L278 197.4 L279 197.4 L279 198.6 L280 198.6 L280 211.1 L281 211.1 L281 220.4 L282 220.4 L282 224.0 L283 224.0 L283 218.0 L284 218.0 L284 217.9 L285 217.9 L285 214.2 L286 214.2 L286 209.4 L287 209.4 L287 204.8 L288 204.8 L288 199.4 L289 199.4 L289 206.8 L290 206.8 L290 213.0 L291 213.0 L291 196.2 L292 196.2 L292 205.0 L293 205.0 L293 202.0 L294 202.0 L294 199.1 L295 199.1 L295 190.9 L296 190.9 L296 195.7 L297 195.7 L297 202.8 L298 202.8 L298 205.9 L299 205.9 L299 215.6 L300 215.6 L300 220.1 L301 220.1 L301 211.4 L302 211.4 L302 212.2 L303 212.2 L303 220.9 L304 220.9 L304 218.7 L305 218.7 L305 220.2 L306 220.2 L306 229.1 L307 229.1 L307 225.5 L308 225.5 L308 231.9 L309 231.9 L309 235.3 L310 235.3 L310 229.2 L311 229.2 L311 219.5 L312 219.5 L312 205.3 L313 205.3 L313 199.6 L314 199.6 L314 204.1 L315 204.1 L315 206.9 L316 206.9 L316 204.6 L317 204.6 L317 204.7 L318 204.7 L318 197.9 L319 197.9 L319 194.6 L320 194.6 L320 186.7 L321 186.7 L321 199.5 L322 199.5 L322 190.6 L323 190.6 L323 185.4 L324 185.4 L324 190.9 L325 190.9 L325 195.8 L326 195.8 L326 209.2 L327 209.2 L327 213.2 L328 213.2 L328 213.5 L329 213.5 L329 210.3 L330 210.3 L330 200.2 L331 200.2 L331 207.9 L332 207.9 L332 187.6 L333 187.6 L333 199.9 L334 199.9 L334 191.9 L335 191.9 L335 198.9 L336 198.9 L336 200.6 L337 200.6 L337 192.1 L338 192.1 L338 205.7 L339 205.7 L339 204.4 L340 204.4 L340 203.1 L341 203.1 L341 202.1 L342 202.1 L342 200.1 L343 200.1 L343 207.3 L344 207.3 L344 203.8 L345 203.8 L345 205.7 L346 205.7 L346 209.7 L347 209.7 L347 210.7 L348 210.7 L348 211.5 L349 211.5 L349 209.4 L350 209.4 L350 216.8 L351 216.8 L351 206.7 L352 206.7 L352 205.5 L353 205.5 L353 198.9 L354 198.9 L354 205.1 L355 205.1 L355 198.7 L356 198.7 L356 206.8 L357 206.8 L357 189.7 L358 189.7 L358 196.6 L359 196.6 L359 199.3 L360 199.3 L360 201.8 L361 201.8 L361 204.0 L362 204.0 L362 202.9 L363 202.9 L363 202.6 L364 202.6 L364 198.5 L365 198.5 L365 206.4 L366 206.4 L366 203.1 L367 203.1 L367 207.2 L368 207.2 L368 198.8 L369 198.8 L369 206.0 L370 206.0 L370 200.3 L371 200.3 L371 205.2 L372 205.2 L372 211.6 L373 211.6 L373 217.0 L374 217.0 L374 208.2 L375 208.2 L375 202.3 L376 202.3 L376 194.8 L377 194.8 L377 198.7 L378 198.7 L378 207.6 L379 207.6 L379 207.3 L380 207.3 L380 204.0 L381 204.0 L381 209.0 L382 209.0 L382 195.4 L383 195.4 L383 192.9 L384 192.9 L384 200.3 L385 200.3 L385 207.3 L386 207.3 L386 205.2 L387 205.2 L387 193.3 L388 193.3 L388 202.1 L389 202.1 L389 205.2 L390 205.2 L390 199.8 L391 199.8 L391 209.6 L392 209.6 L392 217.7 L393 217.7 L393 225.6 L394 225.6 L394 225.3 L395 225.3 L395 228.4 L396 228.4 L396 231.8 L397 231.8 L397 228.7 L398 228.7 L398 232.0 L399 232.0 L399 225.0 L400 225.0 L400 231.8 L401 231.8 L401 228.5 L402 228.5 L402 229.1 L403 229.1 L403 226.3 L404 226.3 L404 232.3 L405 232.3 L405 237.6 L406 237.6 L406 230.8 L407 230.8 L407 225.6 L408 225.6 L408 217.7 L409 217.7 L409 217.7 L410 217.7 L410 214.3 L411 214.3 L411 218.3 L412 218.3 L412 211.8 L413 211.8 L413 212.8 L414 212.8 L414 214.4 L415 214.4 L415 213.7 L416 213.7 L416 211.6 L417 211.6 L417 203.4 L418 203.4 L418 215.3 L419 215.3 L419 211.6 L420 211.6 L420 208.0 L421 208.0 L421 211.7 L422 211.7 L422 208.1 L423 208.1 L423 210.9 L424 210.9 L424 219.3 L425 219.3 L425 222.7 L426 222.7 L426 217.6 L427 217.6 L427 213.0 L428 213.0 L428 209.1 L429 209.1 L429 201.7 L430 201.7 L430 207.5 L431 207.5 L431 205.6 L432 205.6 L432 202.8 L433 202.8 L433 211.2 L434 211.2 L434 214.3 L435 214.3 L435 203.0 L436 203.0 L436 212.9 L437 212.9 L437 214.6 L438 214.6 L438 209.9 L439 209.9 L439 213.5 L440 213.5 L440 205.8 L441 205.8 L441 219.8 L442 219.8 L442 216.3 L443 216.3 L443 211.9 L444 211.9 L444 225.0 L445 225.0 L445 223.6 L446 223.6 L446 230.9 L447 230.9 L447 219.3 L448 219.3 L448 219.5 L449 219.5 L449 213.7 L450 213.7 L450 212.2 L451 212.2 L451 201.1 L452 201.1 L452 206.2 L453 206.2 L453 197.2 L454 197.2 L454 202.5 L455 202.5 L455 189.0 L456 189.0 L456 186.6 L457 186.6 L457 195.3 L458 195.3 L458 207.0 L459 207.0 L459 206.5 L460 206.5 L460 222.2 L461 222.2 L461 212.4 L462 212.4 L462 209.7 L463 209.7 L463 212.8 L464 212.8 L464 211.3 L465 211.3 L465 199.1 L466 199.1 L466 209.0 L467 209.0 L467 203.5 L468 203.5 L468 192.6 L469 192.6 L469 200.1 L470 200.1 L470 213.2 L471 213.2 L471 206.0 L472 206.0 L472 210.2 L473 210.2 L473 218.9 L474 218.9 L474 210.4 L475 210.4 L475 210.4 L476 210.4 L476 212.8 L477 212.8 L477 214.0 L478 214.0 L478 204.2 L479 204.2 L479 209.9 L480 209.9 L480 208.1 L481 208.1 L481 208.0 L482 208.0 L482 211.6 L483 211.6 L483 207.9 L484 207.9 L484 220.7 L485 220.7 L485 223.5 L486 223.5 L486 217.5 L487 217.5 L487 214.1 L488 214.1 L488 197.7 L489 197.7 L489 194.3 L490 194.3 L490 202.3 L491 202.3 L491 203.5 L492 203.5 L492 191.2 L493 191.2 L493 188.2 L494 188.2 L494 184.3 L495 184.3 L495 187.2 L496 187.2 L496 185.1 L497 185.1 L497 201.3 L498 201.3 L498 195.2 L499 195.2 L499 193.9 L500 193.9 L500 202.0 L501 202.0 L501 199.5 L502 199.5 L502 201.2 L503 201.2 L503 210.1 L504 210.1 L504 217.0 L505 217.0 L505 226.0 L506 226.0 L506 222.8 L507 222.8 L507 219.8 L508 219.8 L508 224.6 L509 224.6 L509 224.6 L510 224.6 L510 221.3 L511 221.3 L511 214.1 L512 214.1 L512 199.6 L513 199.6 L513 198.7 L514 198.7 L514 196.4 L515 196.4 L515 204.4 L516 204.4 L516 205.8 L517 205.8 L517 187.8 L518 187.8 L518 198.6 L519 198.6 L519 194.7 L520 194.7 L520 186.3 L521 186.3 L521 185.4 L522 185.4 L522 178.7 L523 178.7 L523 178.5 L524 178.5 L524 190.6 L525 190.6 L525 187.0 L526 187.0 L526 190.2 L527 190.2 L527 187.4 L528 187.4 L528 183.0 L529 183.0 L529 187.5 L530 187.5 L530 193.5 L531 193.5 L531 202.0 L532 202.0 L532 211.2 L533 211.2 L533 209.6 L534 209.6 L534 203.4 L535 203.4 L535 200.1 L536 200.1 L536 197.5 L537 197.5 L537 194.1 L538 194.1 L538 199.9 L539 199.9 L539 205.7 L540 205.7 L540 205.1 L541 205.1 L541 194.3 L542 194.3 L542 190.3 L543 190.3 L543 201.6 L544 201.6 L544 197.1 L545 197.1 L545 208.5 L546 208.5 L546 211.1 L547 211.1 L547 206.8 L548 206.8 L548 203.2 L549 203.2 L549 216.8 L550 216.8 L550 213.0 L551 213.0 L551 212.5 L552 212.5 L552 218.5 L553 218.5 L553 217.5 L554 217.5 L554 218.0 L555 218.0 L555 217.5 L556 217.5 L556 213.1 L557 213.1 L557 202.6 L558 202.6 L558 199.4 L559 199.4 L559 190.1 L560 190.1 L560 186.3 L561 186.3 L561 182.8 L562 182.8 L562 189.2 L563 189.2 L563 177.2 L564 177.2 L564 173.0 L565 173.0 L565 183.3 L566 183.3 L566 189.4 L567 189.4 L567 190.1 L568 190.1 L568 196.7 L569 196.7 L569 198.0 L570 198.0 L570 190.0 L571 190.0 L571 186.0 L572 186.0 L572 201.0 L573 201.0 L573 192.1 L574 192.1 L574 206.4 L575 206.4 L575 195.5 L576 195.5 L576 192.1 L577 192.1 L577 205.9 L578 205.9 L578 211.4 L579 211.4 L579 217.3 L580 217.3 L580 208.7 L581 208.7 L581 212.5 L582 212.5 L582 212.0 L583 212.0 L583 218.9 L584 218.9 L584 215.1 L585 215.1 L585 206.7 L586 206.7 L586 206.0 L587 206.0 L587 197.8 L588 197.8 L588 209.4 L589 209.4 L589 214.1 L590 214.1 L590 216.4 L591 216.4 L591 206.7 L592 206.7 L592 206.2 L593 206.2 L593 215.0 L594 215.0 L594 217.7 L595 217.7 L595 217.3 L596 217.3 L596 229.1 L597 229.1 L597 217.6 L598 217.6 L598 205.1 L599 205.1 L599 192.3 L600 192.3 L600 180.4 L601 180.4 L601 179.7 L602 179.7 L602 184.9 L603 184.9 L603 192.4 L604 192.4 L604 179.7 L605 179.7 L605 191.5 L606 191.5 L606 200.5 L607 200.5 L607 187.7 L608 187.7 L608 182.1 L609 182.1 L609 188.7 L610 188.7 L610 196.9 L611 196.9 L611 199.4 L612 199.4 L612 190.6 L613 190.6 L613 201.0 L614 201.0 L614 192.3 L615 192.3 L615 202.2 L616 202.2 L616 205.2 L617 205.2 L617 196.2 L618 196.2 L618 197.8 L619 197.8 L619 206.2 L620 206.2 L620 207.1 L621 207.1 L621 205.9 L622 205.9 L622 196.7 L623 196.7 L623 197.4 L624 197.4 L624 203.5 L625 203.5 L625 212.7 L626 212.7 L626 203.8 L627 203.8 L627 211.7 L628 211.7 L628 215.9 L629 215.9 L629 216.3 L630 216.3 L630 214.9 L631 214.9 L631 209.8 L632 209.8 L632 216.2 L633 216.2 L633 207.2 L634 207.2 L634 204.8 L635 204.8 L635 207.2 L636 207.2 L636 210.1 L637 210.1 L637 217.1 L638 217.1 L638 222.5 L639 222.5 L639 228.8 L640 228.8 L640 229.7 L641 229.7 L641 230.7 L642 230.7 L642 228.7 L643 228.7 L643 234.2 L644 234.2 L644 232.6 L645 232.6 L645 237.3 L646 237.3 L646 238.8 L647 238.8 L647 235.4 L648 235.4 L648 239.1 L649 239.1 L649 238.1 L650 238.1 L650 241.2 L651 241.2 L651 240.9 L652 240.9 L652 242.5 L653 242.5 L653 241.0 L654 241.0 L654 245.5 L655 245.5 L655 244.8 L656 244.8 L656 245.0 L657 245.0 L657 247.9 L658 247.9 L658 246.9 L659 246.9 L659 249.6 L660 249.6 L660 249.9 L661 249.9 L661 250.4 L662 250.4 L662 251.8 L663 251.8 L663 251.1 L664 251.1 L664 252.4 L665 252.4 L665 252.4 L666 252.4 L666 253.7 L667 253.7 L667 255.1 L668 255.1 L668 256.1 L669 256.1 L669 256.2 L670 256.2 L670 257.4 L671 257.4 L671 258.6 L672 258.6 L672 259.1 L673 259.1 L673 259.1 L674 259.1 L674 259.1 L675 259.1 L675 259.1 L676 259.1 L676 259.2 L677 259.2 L677 259.3 L678 259.3 L678 259.3 L679 259.3 L679 259.2 L680 259.2 L680 259.4 L681 259.4 L681 259.4 L682 259.4 L682 259.4 L683 259.4 L683 259.4 L684 259.4 L684 259.5 L685 259.5 L685 260.4 L684 260.4 L684 260.5 L683 260.5 L683 260.5 L682 260.5 L682 260.5 L681 260.5 L681 260.5 L680 260.5 L680 260.5 L679 260.5 L679 260.4 L678 260.4 L678 260.5 L677 260.5 L677 260.5 L676 260.5 L676 260.4 L675 260.4 L675 260.4 L674 260.4 L674 260.5 L673 260.5 L673 260.5 L672 260.5 L672 261.0 L671 261.0 L671 261.3 L670 261.3 L670 261.4 L669 261.4 L669 261.6 L668 261.6 L668 262.3 L667 262.3 L667 262.4 L666 262.4 L666 262.9 L665 262.9 L665 264.3 L664 264.3 L664 265.0 L663 265.0 L663 266.0 L662 266.0 L662 266.3 L661 266.3 L661 266.0 L660 266.0 L660 266.0 L659 266.0 L659 267.4 L658 267.4 L658 267.7 L657 267.7 L657 268.2 L656 268.2 L656 269.3 L655 269.3 L655 267.7 L654 267.7 L654 269.3 L653 269.3 L653 268.7 L652 268.7 L652 268.1 L651 268.1 L651 269.0 L650 269.0 L650 269.1 L649 269.1 L649 270.9 L648 270.9 L648 270.1 L647 270.1 L647 271.7 L646 271.7 L646 272.3 L645 272.3 L645 275.4 L644 275.4 L644 276.6 L643 276.6 L643 277.2 L642 277.2 L642 280.0 L641 280.0 L641 278.2 L640 278.2 L640 285.9 L639 285.9 L639 289.2 L638 289.2 L638 296.2 L637 296.2 L637 298.9 L636 298.9 L636 291.9 L635 291.9 L635 299.4 L634 299.4 L634 295.2 L633 295.2 L633 295.1 L632 295.1 L632 300.3 L631 300.3 L631 297.2 L630 297.2 L630 302.5 L629 302.5 L629 305.7 L628 305.7 L628 296.1 L627 296.1 L627 305.2 L626 305.2 L626 309.7 L625 309.7 L625 307.1 L624 307.1 L624 310.9 L623 310.9 L623 315.1 L622 315.1 L622 302.9 L621 302.9 L621 307.9 L620 307.9 L620 315.1 L619 315.1 L619 314.2 L618 314.2 L618 312.7 L617 312.7 L617 314.0 L616 314.0 L616 314.2 L615 314.2 L615 329.1 L614 329.1 L614 325.6 L613 325.6 L613 329.6 L612 329.6 L612 319.3 L611 319.3 L611 333.9 L610 333.9 L610 325.3 L609 325.3 L609 332.8 L608 332.8 L608 315.1 L607 315.1 L607 317.8 L606 317.8 L606 334.1 L605 334.1 L605 330.7 L604 330.7 L604 314.9 L603 314.9 L603 310.6 L602 310.6 L602 313.9 L601 313.9 L601 305.6 L600 305.6 L600 296.8 L599 296.8 L599 290.9 L598 290.9 L598 297.7 L597 297.7 L597 295.2 L596 295.2 L596 301.3 L595 301.3 L595 307.8 L594 307.8 L594 309.3 L593 309.3 L593 313.6 L592 313.6 L592 308.9 L591 308.9 L591 312.2 L590 312.2 L590 324.5 L589 324.5 L589 313.2 L588 313.2 L588 327.7 L587 327.7 L587 326.1 L586 326.1 L586 313.6 L585 313.6 L585 325.6 L584 325.6 L584 319.5 L583 319.5 L583 312.1 L582 312.1 L582 324.7 L581 324.7 L581 324.5 L580 324.5 L580 309.4 L579 309.4 L579 311.7 L578 311.7 L578 315.5 L577 315.5 L577 303.1 L576 303.1 L576 304.9 L575 304.9 L575 305.6 L574 305.6 L574 307.1 L573 307.1 L573 317.0 L572 317.0 L572 311.2 L571 311.2 L571 308.6 L570 308.6 L570 318.7 L569 318.7 L569 322.1 L568 322.1 L568 329.4 L567 329.4 L567 329.9 L566 329.9 L566 336.6 L565 336.6 L565 329.9 L564 329.9 L564 336.9 L563 336.9 L563 326.8 L562 326.8 L562 331.4 L561 331.4 L561 329.2 L560 329.2 L560 330.8 L559 330.8 L559 321.5 L558 321.5 L558 323.1 L557 323.1 L557 319.0 L556 319.0 L556 303.0 L555 303.0 L555 303.7 L554 303.7 L554 302.8 L553 302.8 L553 298.4 L552 298.4 L552 301.7 L551 301.7 L551 295.8 L550 295.8 L550 304.9 L549 304.9 L549 300.3 L548 300.3 L548 302.9 L547 302.9 L547 309.3 L546 309.3 L546 309.9 L545 309.9 L545 319.6 L544 319.6 L544 323.3 L543 323.3 L543 311.4 L542 311.4 L542 313.2 L541 313.2 L541 313.7 L540 313.7 L540 319.2 L539 319.2 L539 326.3 L538 326.3 L538 328.2 L537 328.2 L537 324.9 L536 324.9 L536 310.3 L535 310.3 L535 304.2 L534 304.2 L534 303.5 L533 303.5 L533 305.5 L532 305.5 L532 307.4 L531 307.4 L531 314.0 L530 314.0 L530 316.4 L529 316.4 L529 309.4 L528 309.4 L528 316.2 L527 316.2 L527 329.0 L526 329.0 L526 320.5 L525 320.5 L525 325.9 L524 325.9 L524 320.7 L523 320.7 L523 322.4 L522 322.4 L522 321.9 L521 321.9 L521 322.6 L520 322.6 L520 321.6 L519 321.6 L519 321.0 L518 321.0 L518 325.3 L517 325.3 L517 324.1 L516 324.1 L516 325.6 L515 325.6 L515 317.3 L514 317.3 L514 304.3 L513 304.3 L513 302.0 L512 302.0 L512 305.2 L511 305.2 L511 303.1 L510 303.1 L510 292.4 L509 292.4 L509 289.3 L508 289.3 L508 290.5 L507 290.5 L507 286.4 L506 286.4 L506 290.6 L505 290.6 L505 299.8 L504 299.8 L504 297.6 L503 297.6 L503 307.3 L502 307.3 L502 311.6 L501 311.6 L501 324.4 L500 324.4 L500 324.8 L499 324.8 L499 320.4 L498 320.4 L498 327.6 L497 327.6 L497 326.2 L496 326.2 L496 325.9 L495 325.9 L495 319.5 L494 319.5 L494 313.8 L493 313.8 L493 318.4 L492 318.4 L492 317.1 L491 317.1 L491 308.6 L490 308.6 L490 317.1 L489 317.1 L489 314.9 L488 314.9 L488 303.7 L487 303.7 L487 307.8 L486 307.8 L486 307.3 L485 307.3 L485 310.2 L484 310.2 L484 302.3 L483 302.3 L483 302.5 L482 302.5 L482 309.7 L481 309.7 L481 319.5 L480 319.5 L480 307.5 L479 307.5 L479 314.1 L478 314.1 L478 321.3 L477 321.3 L477 324.6 L476 324.6 L476 313.7 L475 313.7 L475 307.9 L474 307.9 L474 306.5 L473 306.5 L473 309.4 L472 309.4 L472 303.3 L471 303.3 L471 312.2 L470 312.2 L470 305.8 L469 305.8 L469 311.5 L468 311.5 L468 309.3 L467 309.3 L467 315.6 L466 315.6 L466 321.9 L465 321.9 L465 318.7 L464 318.7 L464 312.2 L463 312.2 L463 316.9 L462 316.9 L462 323.7 L461 323.7 L461 318.8 L460 318.8 L460 323.3 L459 323.3 L459 312.6 L458 312.6 L458 325.8 L457 325.8 L457 319.0 L456 319.0 L456 326.6 L455 326.6 L455 312.5 L454 312.5 L454 319.0 L453 319.0 L453 307.7 L452 307.7 L452 306.8 L451 306.8 L451 303.4 L450 303.4 L450 295.0 L449 295.0 L449 292.0 L448 292.0 L448 283.4 L447 283.4 L447 278.0 L446 278.0 L446 284.0 L445 284.0 L445 282.6 L444 282.6 L444 287.2 L443 287.2 L443 297.1 L442 297.1 L442 300.7 L441 300.7 L441 309.8 L440 309.8 L440 308.9 L439 308.9 L439 313.0 L438 313.0 L438 309.8 L437 309.8 L437 309.0 L436 309.0 L436 312.8 L435 312.8 L435 302.3 L434 302.3 L434 313.6 L433 313.6 L433 300.2 L432 300.2 L432 305.7 L431 305.7 L431 310.1 L430 310.1 L430 303.9 L429 303.9 L429 307.7 L428 307.7 L428 300.2 L427 300.2 L427 299.0 L426 299.0 L426 288.4 L425 288.4 L425 292.0 L424 292.0 L424 296.2 L423 296.2 L423 305.0 L422 305.0 L422 303.2 L421 303.2 L421 306.5 L420 306.5 L420 302.9 L419 302.9 L419 300.8 L418 300.8 L418 304.0 L417 304.0 L417 305.2 L416 305.2 L416 298.7 L415 298.7 L415 302.5 L414 302.5 L414 306.3 L413 306.3 L413 304.8 L412 304.8 L412 304.9 L411 304.9 L411 304.0 L410 304.0 L410 295.1 L409 295.1 L409 290.2 L408 290.2 L408 291.8 L407 291.8 L407 280.6 L406 280.6 L406 277.8 L405 277.8 L405 280.1 L404 280.1 L404 281.1 L403 281.1 L403 275.2 L402 275.2 L402 276.2 L401 276.2 L401 279.9 L400 279.9 L400 284.1 L399 284.1 L399 287.9 L398 287.9 L398 288.2 L397 288.2 L397 284.6 L396 284.6 L396 290.8 L395 290.8 L395 291.7 L394 291.7 L394 297.2 L393 297.2 L393 299.4 L392 299.4 L392 294.4 L391 294.4 L391 295.6 L390 295.6 L390 302.4 L389 302.4 L389 302.1 L388 302.1 L388 307.2 L387 307.2 L387 307.7 L386 307.7 L386 310.2 L385 310.2 L385 316.3 L384 316.3 L384 311.3 L383 311.3 L383 312.6 L382 312.6 L382 309.0 L381 309.0 L381 301.9 L380 301.9 L380 308.2 L379 308.2 L379 308.1 L378 308.1 L378 307.9 L377 307.9 L377 323.6 L376 323.6 L376 317.4 L375 317.4 L375 311.3 L374 311.3 L374 306.3 L373 306.3 L373 307.9 L372 307.9 L372 306.9 L371 306.9 L371 308.7 L370 308.7 L370 299.2 L369 299.2 L369 298.3 L368 298.3 L368 308.5 L367 308.5 L367 305.8 L366 305.8 L366 303.9 L365 303.9 L365 304.0 L364 304.0 L364 309.0 L363 309.0 L363 319.6 L362 319.6 L362 322.8 L361 322.8 L361 320.7 L360 320.7 L360 314.0 L359 314.0 L359 310.4 L358 310.4 L358 319.7 L357 319.7 L357 319.3 L356 319.3 L356 306.1 L355 306.1 L355 309.6 L354 309.6 L354 313.3 L353 313.3 L353 309.0 L352 309.0 L352 295.4 L351 295.4 L351 296.2 L350 296.2 L350 294.5 L349 294.5 L349 293.1 L348 293.1 L348 291.4 L347 291.4 L347 294.5 L346 294.5 L346 299.8 L345 299.8 L345 303.5 L344 303.5 L344 306.2 L343 306.2 L343 302.0 L342 302.0 L342 310.6 L341 310.6 L341 301.0 L340 301.0 L340 311.3 L339 311.3 L339 320.8 L338 320.8 L338 318.5 L337 318.5 L337 317.8 L336 317.8 L336 311.0 L335 311.0 L335 315.7 L334 315.7 L334 329.2 L333 329.2 L333 313.0 L332 313.0 L332 313.2 L331 313.2 L331 305.4 L330 305.4 L330 308.1 L329 308.1 L329 298.6 L328 298.6 L328 304.1 L327 304.1 L327 311.9 L326 311.9 L326 315.5 L325 315.5 L325 312.3 L324 312.3 L324 304.4 L323 304.4 L323 313.2 L322 313.2 L322 314.1 L321 314.1 L321 325.8 L320 325.8 L320 313.1 L319 313.1 L319 304.2 L318 304.2 L318 299.5 L317 299.5 L317 293.5 L316 293.5 L316 304.4 L315 304.4 L315 307.3 L314 307.3 L314 315.8 L313 315.8 L313 318.5 L312 318.5 L312 317.5 L311 317.5 L311 302.6 L310 302.6 L310 295.5 L309 295.5 L309 297.5 L308 297.5 L308 283.5 L307 283.5 L307 281.3 L306 281.3 L306 287.4 L305 287.4 L305 286.7 L304 286.7 L304 286.6 L303 286.6 L303 289.9 L302 289.9 L302 295.1 L301 295.1 L301 291.3 L300 291.3 L300 291.3 L299 291.3 L299 299.0 L298 299.0 L298 309.1 L297 309.1 L297 317.6 L296 317.6 L296 312.7 L295 312.7 L295 324.9 L294 324.9 L294 318.1 L293 318.1 L293 305.5 L292 305.5 L292 308.6 L291 308.6 L291 311.1 L290 311.1 L290 322.0 L289 322.0 L289 317.8 L288 317.8 L288 318.5 L287 318.5 L287 304.8 L286 304.8 L286 303.6 L285 303.6 L285 299.6 L284 299.6 L284 303.9 L283 303.9 L283 296.6 L282 296.6 L282 299.9 L281 299.9 L281 299.9 L280 299.9 L280 312.5 L279 312.5 L279 306.3 L278 306.3 L278 316.2 L277 316.2 L277 308.4 L276 308.4 L276 313.0 L275 313.0 L275 309.0 L274 309.0 L274 313.5 L273 313.5 L273 306.5 L272 306.5 L272 316.5 L271 316.5 L271 309.5 L270 309.5 L270 318.3 L269 318.3 L269 317.6 L268 317.6 L268 313.8 L267 313.8 L267 324.5 L266 324.5 L266 318.0 L265 318.0 L265 318.1 L264 318.1 L264 318.6 L263 318.6 L263 320.8 L262 320.8 L262 308.4 L261 308.4 L261 304.3 L260 304.3 L260 301.3 L259 301.3 L259 313.1 L258 313.1 L258 306.6 L257 306.6 L257 318.7 L256 318.7 L256 325.6 L255 325.6 L255 323.6 L254 323.6 L254 326.4 L253 326.4 L253 320.0 L252 320.0 L252 310.3 L251 310.3 L251 318.3 L250 318.3 L250 313.1 L249 313.1 L249 312.1 L248 312.1 L248 296.0 L247 296.0 L247 295.9 L246 295.9 L246 294.2 L245 294.2 L245 292.2 L244 292.2 L244 297.9 L243 297.9 L243 293.2 L242 293.2 L242 286.9 L241 286.9 L241 285.3 L240 285.3 L240 291.3 L239 291.3 L239 295.7 L238 295.7 L238 302.7 L237 302.7 L237 304.1 L236 304.1 L236 313.2 L235 313.2 L235 308.7 L234 308.7 L234 301.0 L233 301.0 L233 304.6 L232 304.6 L232 306.6 L231 306.6 L231 305.2 L230 305.2 L230 302.7 L229 302.7 L229 295.5 L228 295.5 L228 300.9 L227 300.9 L227 289.0 L226 289.0 L226 292.8 L225 292.8 L225 283.1 L224 283.1 L224 283.7 L223 283.7 L223 290.3 L222 290.3 L222 293.9 L221 293.9 L221 290.5 L220 290.5 L220 296.7 L219 296.7 L219 299.5 L218 299.5 L218 307.7 L217 307.7 L217 301.7 L216 301.7 L216 301.5 L215 301.5 L215 307.0 L214 307.0 L214 302.5 L213 302.5 L213 303.1 L212 303.1 L212 296.2 L211 296.2 L211 291.9 L210 291.9 L210 296.6 L209 296.6 L209 296.4 L208 296.4 L208 293.3 L207 293.3 L207 291.0 L206 291.0 L206 284.4 L205 284.4 L205 277.7 L204 277.7 L204 276.2 L203 276.2 L203 277.3 L202 277.3 L202 278.6 L201 278.6 L201 276.4 L200 276.4 L200 277.0 L199 277.0 L199 278.7 L198 278.7 L198 278.2 L197 278.2 L197 278.2 L196 278.2 L196 275.9 L195 275.9 L195 280.4 L194 280.4 L194 277.4 L193 277.4 L193 283.1 L192 283.1 L192 286.6 L191 286.6 L191 286.8 L190 286.8 L190 290.2 L189 290.2 L189 294.0 L188 294.0 L188 297.9 L187 297.9 L187 292.9 L186 292.9 L186 300.7 L185 300.7 L185 308.7 L184 308.7 L184 306.6 L183 306.6 L183 307.9 L182 307.9 L182 305.4 L181 305.4 L181 298.7 L180 298.7 L180 301.8 L179 301.8 L179 304.8 L178 304.8 L178 300.1 L177 300.1 L177 298.7 L176 298.7 L176 297.2 L175 297.2 L175 290.5 L174 290.5 L174 294.9 L173 294.9 L173 301.9 L172 301.9 L172 297.7 L171 297.7 L171 295.9 L170 295.9 L170 298.7 L169 298.7 L169 302.2 L168 302.2 L168 295.5 L167 295.5 L167 298.0 L166 298.0 L166 298.1 L165 298.1 L165 303.9 L164 303.9 L164 306.1 L163 306.1 L163 310.8 L162 310.8 L162 313.0 L161 313.0 L161 308.2 L160 308.2 L160 310.8 L159 310.8 L159 309.1 L158 309.1 L158 306.5 L157 306.5 L157 307.8 L156 307.8 L156 298.7 L155 298.7 L155 303.9 L154 303.9 L154 297.0 L153 297.0 L153 294.9 L152 294.9 L152 289.3 L151 289.3 L151 285.8 L150 285.8 L150 286.0 L149 286.0 L149 279.3 L148 279.3 L148 279.2 L147 279.2 L147 279.2 L146 279.2 L146 283.6 L145 283.6 L145 289.2 L144 289.2 L144 287.1 L143 287.1 L143 296.1 L142 296.1 L142 292.2 L141 292.2 L141 287.6 L140 287.6 L140 287.3 L139 287.3 L139 290.5 L138 290.5 L138 288.4 L137 288.4 L137 292.1 L136 292.1 L136 294.7 L135 294.7 L135 289.6 L134 289.6 L134 285.6 L133 285.6 L133 283.2 L132 283.2 L132 285.6 L131 285.6 L131 277.7 L130 277.7 L130 276.0 L129 276.0 L129 271.9 L128 271.9 L128 273.5 L127 273.5 L127 274.4 L126 274.4 L126 277.9 L125 277.9 L125 278.0 L124 278.0 L124 278.5 L123 278.5 L123 277.6 L122 277.6 L122 278.4 L121 278.4 L121 285.1 L120 285.1 L120 281.4 L119 281.4 L119 287.8 L118 287.8 L118 291.5 L117 291.5 L117 289.4 L116 289.4 L116 295.9 L115 295.9 L115 296.0 L114 296.0 L114 292.5 L113 292.5 L113 289.6 L112 289.6 L112 291.2 L111 291.2 L111 287.3 L110 287.3 L110 278.9 L109 278.9 L109 270.1 L108 270.1 L108 265.8 L107 265.8 L107 266.4 L106 266.4 L106 265.9 L105 265.9 L105 266.6 L104 266.6 L104 266.2 L103 266.2 L103 266.0 L102 266.0 L102 267.9 L101 267.9 L101 267.4 L100 267.4 L100 268.3 L99 268.3 L99 267.4 L98 267.4 L98 268.2 L97 268.2 L97 270.2 L96 270.2 L96 270.2 L95 270.2 L95 272.1 L94 272.1 L94 274.6 L93 274.6 L93 275.1 L92 275.1 L92 273.1 L91 273.1 L91 275.3 L90 275.3 L90 277.3 L89 277.3 L89 277.8 L88 277.8 L88 276.7 L87 276.7 L87 280.7 L86 280.7 L86 282.6 L85 282.6 L85 285.0 L84 285.0 L84 287.0 L83 287.0 L83 282.2 L82 282.2 L82 286.4 L81 286.4 L81 292.8 L80 292.8 L80 289.6 L79 289.6 L79 287.7 L78 287.7 L78 282.1 L77 282.1 L77 280.5 L76 280.5 L76 273.5 L75 273.5 L75 275.0 L74 275.0 L74 279.6 L73 279.6 L73 283.0 L72 283.0 L72 284.2 L71 284.2 L71 283.7 L70 283.7 L70 287.0 L69 287.0 L69 287.2 L68 287.2 L68 287.1 L67 287.1 L67 285.1 L66 285.1 L66 282.2 L65 282.2 L65 284.5 L64 284.5 L64 286.1 L63 286.1 L63 281.4 L62 281.4 L62 283.6 L61 283.6 L61 289.7 L60 289.7 L60 291.7 L59 291.7 L59 288.2 L58 288.2 L58 292.3 L57 292.3 L57 287.5 L56 287.5 L56 297.2 L55 297.2 L55 297.1 L54 297.1 L54 291.1 L53 291.1 L53 294.5 L52 294.5 L52 296.6 L51 296.6 L51 297.9 L50 297.9 L50 289.0 L49 289.0 L49 286.4 L48 286.4 L48 283.8 L47 283.8 L47 283.1 L46 283.1 L46 284.4 L45 284.4 L45 288.5 L44 288.5 L44 289.4 L43 289.4 L43 281.7 L42 281.7 L42 284.0 L41 284.0 L41 290.1 L40 290.1 L40 288.9 L39 288.9 L39 286.0 L38 286.0 L38 293.6 L37 293.6 L37 288.4 L36 288.4 L36 293.0 L35 293.0 L35 289.9 L34 289.9 L34 289.2 L33 289.2 L33 295.0 L32 295.0 L32 292.1 L31 292.1 L31 291.0 L30 291.0 L30 288.4 L29 288.4 L29 290.8 L28 290.8 L28 290.8 L27 290.8 L27 287.7 L26 287.7 L26 284.7 L25 284.7 L25 280.5 L24 280.5 L24 278.2 L23 278.2 L23 277.2 L22 277.2 L22 277.2 L21 277.2 L21 282.2 L20 282.2 L20 285.5 L19 285.5 L19 283.9 L18 283.9 L18 286.5 L17 286.5 L17 284.7 L16 284.7 L16 287.8 L15 287.8 L15 283.0 L14 283.0 L14 280.2 L13 280.2 L13 275.9 L12 275.9 L12 271.1 L11 271.1 Z" fill="#1bef9f"/><path d="M11.5 271.1 V279.3 M13.5 234.9 V232.5 M15.5 224.7 V223.1 M16.5 232.8 V226.5 M16.5 284.7 V296.7 M17.5 286.5 V297.7 M19.5 230.3 V221.7 M19.5 285.5 V295.8 M20.5 282.2 V309.3 M21.5 231.1 V217.6 M21.5 277.2 V314.0 M23.5 236.8 V220.3 M24.5 238.8 V230.1 M25.5 238.8 V229.4 M26.5 236.6 V224.0 M26.5 287.7 V295.7 M27.5 225.1 V216.9 M27.5 290.8 V296.7 M28.5 219.9 V213.1 M28.5 290.8 V296.1 M29.5 216.7 V212.9 M29.5 288.4 V297.1 M30.5 220.6 V209.2 M31.5 292.1 V296.0 M32.5 214.7 V209.9 M34.5 217.7 V212.9 M35.5 224.3 V209.2 M36.5 288.4 V295.9 M37.5 293.6 V299.7 M38.5 229.9 V219.1 M38.5 286.0 V294.4 M39.5 230.4 V221.7 M41.5 233.2 V222.4 M42.5 281.7 V297.4 M43.5 234.0 V226.4 M47.5 229.0 V217.8 M50.5 224.4 V200.3 M50.5 297.9 V304.2 M51.5 296.6 V308.2 M52.5 223.1 V208.3 M54.5 232.1 V208.4 M54.5 297.1 V304.8 M55.5 297.2 V304.2 M56.5 233.5 V208.0 M57.5 230.7 V216.2 M57.5 292.3 V299.7 M58.5 288.2 V298.2 M59.5 229.4 V217.4 M59.5 291.7 V301.3 M60.5 289.7 V300.1 M61.5 237.7 V223.8 M62.5 236.7 V214.4 M62.5 281.4 V296.9 M64.5 236.1 V226.3 M64.5 284.5 V296.3 M65.5 237.5 V219.2 M66.5 234.8 V217.7 M67.5 287.1 V293.3 M68.5 236.5 V219.0 M69.5 235.1 V217.6 M69.5 287.0 V292.9 M70.5 283.7 V293.1 M72.5 283.0 V288.1 M73.5 279.6 V285.7 M74.5 275.0 V287.0 M75.5 235.5 V224.7 M76.5 280.5 V295.1 M77.5 282.1 V297.2 M83.5 287.0 V300.3 M84.5 240.1 V222.5 M85.5 240.0 V227.3 M86.5 235.6 V228.0 M87.5 276.7 V288.1 M88.5 240.0 V228.0 M89.5 242.7 V227.1 M89.5 277.3 V285.9 M90.5 241.1 V227.7 M94.5 272.1 V285.3 M95.5 243.2 V234.4 M95.5 270.2 V277.7 M96.5 270.2 V278.9 M97.5 244.6 V237.0 M99.5 246.7 V242.4 M99.5 268.3 V272.0 M100.5 267.4 V271.3 M102.5 266.0 V271.8 M103.5 266.2 V270.8 M104.5 266.6 V270.0 M105.5 246.7 V242.5 M107.5 249.1 V245.4 M108.5 249.7 V247.2 M109.5 249.6 V246.5 M110.5 287.3 V294.6 M111.5 241.6 V234.7 M111.5 291.2 V304.2 M115.5 229.1 V215.6 M116.5 233.1 V221.0 M116.5 289.4 V298.1 M120.5 236.8 V218.8 M120.5 285.1 V296.0 M121.5 278.4 V293.5 M122.5 234.8 V216.0 M123.5 238.0 V226.8 M123.5 278.5 V285.8 M124.5 240.4 V216.2 M125.5 277.9 V289.9 M126.5 274.4 V285.9 M127.5 237.5 V221.0 M128.5 271.9 V282.2 M129.5 240.7 V224.0 M130.5 277.7 V294.0 M133.5 230.1 V211.7 M134.5 289.6 V301.5 M135.5 294.7 V302.7 M136.5 292.1 V309.0 M138.5 223.1 V205.8 M138.5 290.5 V313.7 M139.5 218.8 V199.6 M140.5 218.4 V206.7 M141.5 292.2 V307.9 M142.5 219.6 V208.8 M142.5 296.1 V309.2 M143.5 287.1 V305.0 M144.5 226.1 V215.1 M146.5 232.0 V218.6 M146.5 279.2 V289.2 M148.5 279.3 V288.8 M149.5 286.0 V293.1 M150.5 237.1 V226.6 M150.5 285.8 V296.6 M152.5 294.9 V299.6 M154.5 213.7 V197.4 M156.5 220.4 V188.9 M158.5 206.9 V181.7 M163.5 205.5 V198.4 M164.5 202.8 V195.3 M164.5 303.9 V316.3 M165.5 202.1 V194.3 M166.5 204.9 V190.0 M167.5 203.4 V190.9 M167.5 295.5 V316.9 M168.5 207.7 V193.1 M168.5 302.2 V317.9 M171.5 297.7 V312.2 M172.5 301.9 V314.7 M174.5 228.4 V209.2 M175.5 221.5 V209.1 M175.5 297.2 V312.6 M177.5 221.1 V199.4 M177.5 300.1 V322.1 M178.5 214.4 V202.9 M179.5 223.3 V197.5 M180.5 298.7 V322.6 M181.5 224.0 V203.2 M182.5 225.7 V207.1 M182.5 307.9 V317.4 M183.5 221.9 V202.2 M183.5 306.6 V316.8 M185.5 300.7 V313.7 M187.5 223.7 V207.6 M188.5 224.7 V206.9 M188.5 294.0 V303.8 M190.5 286.8 V296.1 M191.5 286.6 V295.9 M192.5 234.4 V228.2 M192.5 283.1 V290.3 M193.5 277.4 V290.0 M194.5 280.4 V288.2 M195.5 238.6 V229.0 M196.5 278.2 V285.2 M197.5 238.8 V231.1 M198.5 278.7 V284.4 M199.5 235.1 V230.8 M199.5 277.0 V283.0 M201.5 278.6 V281.3 M202.5 277.3 V283.6 M203.5 238.2 V228.9 M203.5 276.2 V283.6 M204.5 277.7 V285.9 M205.5 284.4 V294.9 M206.5 219.7 V211.2 M207.5 218.2 V210.7 M207.5 293.3 V314.7 M208.5 204.4 V200.4 M209.5 296.6 V309.8 M210.5 211.1 V201.6 M210.5 291.9 V311.9 M211.5 214.9 V201.6 M211.5 296.2 V313.2 M212.5 303.1 V311.5 M216.5 215.7 V197.2 M216.5 301.7 V309.8 M218.5 299.5 V309.5 M219.5 220.3 V210.6 M220.5 222.5 V209.6 M220.5 290.5 V300.2 M222.5 226.8 V214.0 M223.5 283.7 V297.8 M224.5 218.4 V210.7 M224.5 283.1 V294.6 M225.5 215.9 V206.0 M226.5 289.0 V308.2 M227.5 213.8 V200.0 M227.5 300.9 V316.8 M228.5 295.5 V314.4 M229.5 302.7 V318.0 M230.5 223.3 V206.3 M232.5 304.6 V314.8 M233.5 301.0 V315.5 M234.5 308.7 V323.4 M235.5 205.4 V196.3 M236.5 304.1 V324.3 M237.5 302.7 V318.6 M238.5 295.7 V311.7 M239.5 208.6 V200.1 M239.5 291.3 V316.1 M240.5 203.3 V200.2 M240.5 285.3 V314.1 M244.5 292.2 V317.8 M246.5 216.4 V207.0 M248.5 203.0 V189.9 M248.5 312.1 V327.6 M249.5 199.8 V175.0 M249.5 313.1 V333.7 M250.5 318.3 V329.0 M251.5 201.7 V179.6 M252.5 203.7 V178.5 M252.5 320.0 V331.6 M254.5 209.5 V190.3 M256.5 318.7 V331.1 M257.5 201.2 V188.5 M257.5 306.6 V322.7 M259.5 301.3 V327.2 M260.5 199.0 V181.8 M261.5 308.4 V328.5 M263.5 318.6 V336.9 M264.5 204.6 V184.9 M264.5 318.1 V331.1 M265.5 208.7 V188.9 M266.5 202.6 V190.2 M266.5 324.5 V334.8 M267.5 208.6 V196.1 M267.5 313.8 V329.6 M268.5 201.2 V191.6 M268.5 317.6 V333.8 M270.5 217.3 V197.3 M271.5 316.5 V329.9 M272.5 215.8 V179.8 M272.5 306.5 V328.3 M273.5 212.5 V177.3 M273.5 313.5 V338.1 M274.5 206.1 V186.3 M275.5 313.0 V336.2 M276.5 208.6 V196.8 M277.5 316.2 V336.6 M279.5 198.6 V195.6 M279.5 312.5 V327.4 M280.5 211.1 V202.1 M280.5 299.9 V319.5 M281.5 220.4 V209.1 M282.5 224.0 V209.8 M282.5 296.6 V320.5 M283.5 303.9 V320.4 M284.5 217.9 V208.4 M284.5 299.6 V323.1 M285.5 214.2 V204.7 M285.5 303.6 V328.1 M286.5 304.8 V324.4 M287.5 204.8 V187.8 M288.5 317.8 V328.3 M289.5 322.0 V332.3 M290.5 311.1 V327.4 M291.5 196.2 V186.0 M292.5 305.5 V325.0 M294.5 324.9 V332.5 M296.5 317.6 V327.5 M297.5 202.8 V190.5 M298.5 205.9 V193.3 M298.5 299.0 V318.3 M299.5 215.6 V202.0 M300.5 291.3 V306.6 M301.5 211.4 V203.0 M302.5 289.9 V307.4 M304.5 218.7 V211.6 M305.5 220.2 V216.3 M306.5 229.1 V219.2 M307.5 283.5 V297.7 M308.5 297.5 V306.7 M309.5 235.3 V222.7 M310.5 229.2 V212.3 M310.5 302.6 V318.3 M311.5 317.5 V328.2 M312.5 318.5 V332.6 M313.5 199.6 V185.7 M313.5 315.8 V334.8 M314.5 204.1 V184.9 M314.5 307.3 V330.8 M315.5 206.9 V187.4 M315.5 304.4 V327.5 M316.5 204.6 V177.4 M316.5 293.5 V316.8 M317.5 299.5 V336.5 M318.5 304.2 V322.0 M319.5 313.1 V339.4 M320.5 186.7 V177.1 M321.5 199.5 V186.1 M321.5 314.1 V333.9 M322.5 313.2 V330.9 M324.5 190.9 V182.9 M325.5 195.8 V186.6 M325.5 315.5 V336.2 M326.5 209.2 V193.7 M326.5 311.9 V331.1 M327.5 304.1 V332.8 M328.5 298.6 V319.8 M329.5 210.3 V192.3 M330.5 200.2 V192.1 M330.5 305.4 V330.3 M331.5 207.9 V189.7 M332.5 313.0 V336.8 M333.5 199.9 V176.3 M333.5 329.2 V335.8 M334.5 191.9 V180.1 M335.5 198.9 V179.8 M335.5 311.0 V332.1 M336.5 200.6 V184.6 M338.5 320.8 V329.1 M339.5 204.4 V189.5 M340.5 301.0 V322.7 M341.5 202.1 V192.6 M343.5 207.3 V192.3 M343.5 306.2 V315.4 M345.5 299.8 V315.9 M346.5 294.5 V310.8 M347.5 210.7 V198.5 M347.5 291.4 V308.9 M348.5 211.5 V197.1 M350.5 216.8 V204.4 M350.5 296.2 V314.6 M351.5 206.7 V194.4 M352.5 205.5 V187.7 M352.5 309.0 V322.9 M353.5 198.9 V187.9 M353.5 313.3 V321.3 M354.5 309.6 V330.4 M355.5 198.7 V185.0 M355.5 306.1 V322.3 M356.5 319.3 V328.4 M357.5 319.7 V329.5 M358.5 310.4 V332.9 M360.5 201.8 V184.1 M360.5 320.7 V333.4 M361.5 322.8 V331.7 M362.5 319.6 V324.9 M363.5 202.6 V182.1 M363.5 309.0 V325.9 M364.5 198.5 V189.4 M365.5 206.4 V184.4 M366.5 203.1 V184.1 M366.5 305.8 V319.6 M367.5 308.5 V325.2 M368.5 298.3 V318.8 M370.5 308.7 V327.0 M371.5 306.9 V324.0 M372.5 211.6 V188.5 M372.5 307.9 V323.9 M373.5 306.3 V321.2 M374.5 311.3 V330.6 M375.5 202.3 V189.4 M375.5 317.4 V332.1 M376.5 194.8 V187.4 M377.5 307.9 V326.5 M378.5 207.6 V192.9 M379.5 207.3 V185.4 M379.5 308.2 V317.6 M380.5 204.0 V177.1 M380.5 301.9 V318.3 M381.5 309.0 V319.1 M382.5 195.4 V185.7 M382.5 312.6 V322.2 M383.5 192.9 V179.3 M383.5 311.3 V318.9 M385.5 207.3 V188.6 M385.5 310.2 V328.8 M388.5 302.1 V318.5 M389.5 205.2 V187.0 M389.5 302.4 V312.9 M391.5 209.6 V193.8 M391.5 294.4 V313.9 M392.5 217.7 V206.8 M392.5 299.4 V316.6 M393.5 297.2 V311.4 M396.5 231.8 V218.5 M397.5 228.7 V217.4 M398.5 287.9 V294.1 M399.5 284.1 V292.1 M402.5 275.2 V292.7 M403.5 226.3 V217.4 M403.5 281.1 V296.5 M404.5 232.3 V224.2 M404.5 280.1 V299.1 M406.5 230.8 V220.6 M407.5 225.6 V215.9 M408.5 290.2 V302.2 M410.5 214.3 V203.0 M410.5 304.0 V319.9 M411.5 218.3 V205.6 M411.5 304.9 V317.9 M412.5 211.8 V201.3 M413.5 212.8 V197.4 M413.5 306.3 V323.9 M415.5 298.7 V326.3 M417.5 203.4 V198.5 M418.5 300.8 V319.3 M419.5 211.6 V202.7 M420.5 208.0 V198.0 M420.5 306.5 V312.6 M421.5 211.7 V199.7 M422.5 305.0 V313.2 M424.5 219.3 V206.0 M424.5 292.0 V304.7 M425.5 222.7 V210.5 M425.5 288.4 V302.4 M426.5 217.6 V202.7 M428.5 307.7 V313.7 M429.5 303.9 V318.7 M431.5 205.6 V191.1 M431.5 305.7 V325.5 M432.5 300.2 V320.5 M433.5 211.2 V189.6 M433.5 313.6 V322.1 M436.5 212.9 V193.0 M436.5 309.0 V318.4 M437.5 214.6 V195.0 M437.5 309.8 V318.1 M438.5 313.0 V317.6 M442.5 297.1 V308.9 M443.5 211.9 V203.5 M447.5 219.3 V211.3 M447.5 283.4 V301.4 M448.5 292.0 V309.1 M449.5 295.0 V309.8 M450.5 303.4 V319.8 M451.5 306.8 V336.3 M452.5 206.2 V189.6 M453.5 319.0 V338.8 M454.5 202.5 V177.7 M454.5 312.5 V333.4 M455.5 189.0 V181.6 M456.5 319.0 V335.3 M457.5 195.3 V179.5 M457.5 325.8 V340.0 M458.5 312.6 V331.0 M459.5 323.3 V336.3 M460.5 318.8 V326.1 M462.5 209.7 V197.4 M463.5 212.8 V199.8 M463.5 312.2 V327.9 M465.5 321.9 V334.5 M467.5 203.5 V190.5 M467.5 309.3 V335.1 M470.5 213.2 V202.3 M470.5 312.2 V322.7 M471.5 206.0 V198.4 M472.5 210.2 V201.5 M472.5 309.4 V321.8 M473.5 306.5 V323.9 M474.5 210.4 V194.5 M475.5 210.4 V197.4 M477.5 321.3 V328.5 M478.5 314.1 V333.2 M479.5 307.5 V327.5 M480.5 319.5 V324.1 M482.5 211.6 V192.9 M483.5 207.9 V201.6 M484.5 310.2 V323.9 M486.5 217.5 V205.4 M487.5 214.1 V198.2 M489.5 317.1 V329.4 M490.5 308.6 V327.1 M492.5 191.2 V183.3 M492.5 318.4 V333.2 M493.5 188.2 V182.2 M494.5 184.3 V181.0 M494.5 319.5 V334.1 M496.5 185.1 V182.0 M496.5 326.2 V330.9 M497.5 201.3 V184.0 M498.5 195.2 V186.8 M498.5 320.4 V332.8 M499.5 193.9 V183.8 M501.5 199.5 V192.4 M501.5 311.6 V321.6 M502.5 201.2 V197.3 M502.5 307.3 V319.4 M503.5 210.1 V206.3 M503.5 297.6 V313.9 M504.5 299.8 V310.1 M505.5 290.6 V303.2 M507.5 219.8 V215.8 M508.5 289.3 V301.8 M511.5 214.1 V202.1 M512.5 199.6 V194.5 M513.5 198.7 V187.2 M515.5 204.4 V190.8 M515.5 325.6 V333.6 M516.5 205.8 V189.7 M517.5 325.3 V346.6 M518.5 198.6 V175.9 M519.5 321.6 V344.0 M520.5 186.3 V176.9 M520.5 322.6 V338.3 M521.5 185.4 V174.4 M521.5 321.9 V339.8 M522.5 178.7 V173.3 M525.5 320.5 V338.8 M526.5 190.2 V178.0 M526.5 329.0 V336.2 M527.5 316.2 V331.9 M528.5 309.4 V331.2 M529.5 187.5 V184.2 M530.5 314.0 V328.5 M531.5 307.4 V326.3 M532.5 305.5 V321.9 M533.5 209.6 V199.1 M534.5 304.2 V319.1 M536.5 197.5 V184.4 M536.5 324.9 V332.6 M537.5 328.2 V335.8 M538.5 199.9 V185.5 M540.5 205.1 V190.4 M541.5 194.3 V179.1 M541.5 313.2 V337.5 M543.5 201.6 V186.4 M543.5 323.3 V333.8 M545.5 309.9 V333.5 M546.5 211.1 V192.2 M547.5 206.8 V194.7 M547.5 302.9 V327.3 M548.5 203.2 V197.9 M549.5 216.8 V197.0 M550.5 213.0 V202.0 M551.5 212.5 V205.2 M551.5 301.7 V315.4 M553.5 217.5 V201.6 M553.5 302.8 V317.3 M554.5 218.0 V208.4 M554.5 303.7 V322.9 M555.5 303.0 V324.9 M557.5 323.1 V333.4 M559.5 190.1 V181.4 M559.5 330.8 V335.4 M560.5 186.3 V177.3 M563.5 336.9 V341.1 M564.5 329.9 V342.2 M565.5 183.3 V171.0 M565.5 336.6 V339.6 M566.5 189.4 V174.4 M569.5 318.7 V335.5 M570.5 190.0 V176.5 M570.5 308.6 V324.4 M572.5 201.0 V179.7 M573.5 192.1 V181.4 M573.5 307.1 V325.2 M574.5 206.4 V181.3 M574.5 305.6 V325.2 M576.5 303.1 V333.0 M577.5 205.9 V182.8 M579.5 217.3 V187.7 M581.5 212.5 V193.1 M581.5 324.7 V332.9 M582.5 212.0 V175.1 M582.5 312.1 V329.3 M583.5 319.5 V333.2 M584.5 325.6 V332.7 M585.5 313.6 V328.7 M587.5 197.8 V178.0 M587.5 327.7 V334.2 M588.5 313.2 V327.0 M590.5 216.4 V194.8 M590.5 312.2 V327.6 M591.5 206.7 V188.1 M591.5 308.9 V324.8 M592.5 206.2 V190.3 M592.5 313.6 V331.5 M593.5 215.0 V190.8 M594.5 307.8 V323.8 M596.5 229.1 V211.9 M597.5 217.6 V207.4 M601.5 313.9 V330.9 M602.5 310.6 V337.5 M603.5 314.9 V337.5 M604.5 179.7 V172.7 M605.5 191.5 V173.3 M605.5 334.1 V338.4 M606.5 200.5 V179.4 M607.5 315.1 V338.1 M608.5 332.8 V340.5 M609.5 325.3 V341.9 M610.5 333.9 V342.3 M611.5 199.4 V181.0 M612.5 329.6 V337.5 M614.5 192.3 V179.9 M615.5 202.2 V183.1 M615.5 314.2 V330.3 M616.5 314.0 V323.1 M619.5 315.1 V319.8 M621.5 205.9 V190.7 M622.5 196.7 V191.0 M623.5 310.9 V323.6 M624.5 307.1 V321.2 M625.5 212.7 V200.4 M625.5 309.7 V321.7 M626.5 203.8 V193.3 M627.5 296.1 V310.0 M628.5 305.7 V317.1 M629.5 302.5 V318.1 M630.5 297.2 V307.4 M632.5 295.1 V310.1 M633.5 295.2 V315.3 M634.5 204.8 V196.4 M635.5 291.9 V308.0 M636.5 210.1 V206.1 M636.5 298.9 V305.2 M637.5 217.1 V212.1 M638.5 222.5 V218.8 M638.5 289.2 V300.1 M639.5 228.8 V222.6 M639.5 285.9 V296.1 M642.5 277.2 V283.6 M643.5 234.2 V229.6 M644.5 275.4 V279.5 M645.5 237.3 V230.3 M646.5 238.8 V234.1 M647.5 235.4 V232.2 M647.5 270.1 V275.9 M648.5 239.1 V234.8 M648.5 270.9 V273.9 M650.5 241.2 V237.8 M651.5 240.9 V236.6 M651.5 268.1 V270.7 M652.5 268.7 V272.6 M653.5 241.0 V238.1 M653.5 269.3 V271.6 M654.5 245.5 V241.5 M657.5 247.9 V243.0 M659.5 249.6 V246.1 M660.5 249.9 V245.7 M660.5 266.0 V268.4 M661.5 266.3 V267.6 M662.5 251.8 V248.5 M663.5 251.1 V248.5 M663.5 265.0 V266.2 M664.5 252.4 V250.4 M664.5 264.3 V265.6 M668.5 256.1 V254.4 M669.5 256.2 V255.2 M669.5 261.4 V262.5 M670.5 257.4 V256.3 M670.5 261.3 V261.8 M671.5 261.0 V261.3 M672.5 259.1 V258.0 M672.5 260.5 V260.7 M673.5 260.5 V260.5 M674.5 259.1 V258.1 M675.5 259.1 V258.6 M676.5 260.5 V260.5 M677.5 260.5 V260.5 M678.5 260.4 V260.5 M680.5 259.4 V258.8 M680.5 260.5 V260.5 M681.5 260.5 V260.5 M682.5 259.4 V259.2 M682.5 260.5 V260.5 M683.5 260.5 V260.5 M684.5 259.5 V259.4 M684.5 260.4 V260.5" stroke="#20c488" stroke-width="1" fill="none"/><path d="M11 452.5 L11 440.2 L12 440.2 L12 434.9 L13 434.9 L13 433.0 L14 433.0 L14 425.3 L15 425.3 L15 420.6 L16 420.6 L16 423.1 L17 423.1 L17 421.7 L18 421.7 L18 423.2 L19 423.2 L19 422.8 L20 422.8 L20 425.0 L21 425.0 L21 425.4 L22 425.4 L22 424.0 L23 424.0 L23 424.4 L24 424.4 L24 430.9 L25 430.9 L25 426.0 L26 426.0 L26 429.8 L27 429.8 L27 422.8 L28 422.8 L28 426.2 L29 426.2 L29 425.3 L30 425.3 L30 420.3 L31 420.3 L31 416.9 L32 416.9 L32 417.5 L33 417.5 L33 419.5 L34 419.5 L34 421.8 L35 421.8 L35 415.3 L36 415.3 L36 416.2 L37 416.2 L37 417.6 L38 417.6 L38 422.5 L39 422.5 L39 423.2 L40 423.2 L40 423.9 L41 423.9 L41 426.1 L42 426.1 L42 430.1 L43 430.1 L43 428.2 L44 428.2 L44 427.9 L45 427.9 L45 433.4 L46 433.4 L46 428.6 L47 428.6 L47 422.1 L48 422.1 L48 419.4 L49 419.4 L49 419.2 L50 419.2 L50 416.0 L51 416.0 L51 421.6 L52 421.6 L52 420.2 L53 420.2 L53 423.3 L54 423.3 L54 426.8 L55 426.8 L55 425.7 L56 425.7 L56 428.2 L57 428.2 L57 425.9 L58 425.9 L58 423.5 L59 423.5 L59 427.9 L60 427.9 L60 429.2 L61 429.2 L61 427.1 L62 427.1 L62 427.0 L63 427.0 L63 420.7 L64 420.7 L64 427.9 L65 427.9 L65 430.1 L66 430.1 L66 431.7 L67 431.7 L67 432.8 L68 432.8 L68 428.2 L69 428.2 L69 430.0 L70 430.0 L70 430.8 L71 430.8 L71 430.3 L72 430.3 L72 425.2 L73 425.2 L73 426.6 L74 426.6 L74 431.5 L75 431.5 L75 429.6 L76 429.6 L76 425.5 L77 425.5 L77 421.1 L78 421.1 L78 417.9 L79 417.9 L79 416.6 L80 416.6 L80 423.5 L81 423.5 L81 423.5 L82 423.5 L82 423.1 L83 423.1 L83 424.2 L84 424.2 L84 426.2 L85 426.2 L85 429.3 L86 429.3 L86 431.4 L87 431.4 L87 429.4 L88 429.4 L88 429.4 L89 429.4 L89 432.4 L90 432.4 L90 434.1 L91 434.1 L91 437.2 L92 437.2 L92 435.3 L93 435.3 L93 434.2 L94 434.2 L94 436.1 L95 436.1 L95 434.2 L96 434.2 L96 437.6 L97 437.6 L97 438.0 L98 438.0 L98 440.8 L99 440.8 L99 438.7 L100 438.7 L100 440.0 L101 440.0 L101 442.8 L102 442.8 L102 441.3 L103 441.3 L103 442.3 L104 442.3 L104 443.6 L105 443.6 L105 444.9 L106 444.9 L106 445.9 L107 445.9 L107 445.0 L108 445.0 L108 441.9 L109 441.9 L109 438.6 L110 438.6 L110 434.1 L111 434.1 L111 429.8 L112 429.8 L112 423.2 L113 423.2 L113 418.5 L114 418.5 L114 419.0 L115 419.0 L115 421.0 L116 421.0 L116 418.1 L117 418.1 L117 419.0 L118 419.0 L118 423.4 L119 423.4 L119 428.6 L120 428.6 L120 430.8 L121 430.8 L121 428.8 L122 428.8 L122 434.5 L123 434.5 L123 433.7 L124 433.7 L124 434.4 L125 434.4 L125 434.5 L126 434.5 L126 435.4 L127 435.4 L127 435.1 L128 435.1 L128 430.6 L129 430.6 L129 426.8 L130 426.8 L130 424.9 L131 424.9 L131 424.1 L132 424.1 L132 424.2 L133 424.2 L133 424.0 L134 424.0 L134 425.2 L135 425.2 L135 426.6 L136 426.6 L136 423.1 L137 423.1 L137 426.3 L138 426.3 L138 422.9 L139 422.9 L139 425.7 L140 425.7 L140 425.0 L141 425.0 L141 423.5 L142 423.5 L142 421.1 L143 421.1 L143 424.9 L144 424.9 L144 426.7 L145 426.7 L145 424.2 L146 424.2 L146 421.9 L147 421.9 L147 423.9 L148 423.9 L148 432.1 L149 432.1 L149 428.6 L150 428.6 L150 429.5 L151 429.5 L151 423.9 L152 423.9 L152 424.7 L153 424.7 L153 418.0 L154 418.0 L154 411.7 L155 411.7 L155 414.4 L156 414.4 L156 416.9 L157 416.9 L157 411.5 L158 411.5 L158 406.3 L159 406.3 L159 400.3 L160 400.3 L160 402.8 L161 402.8 L161 406.9 L162 406.9 L162 408.4 L163 408.4 L163 407.2 L164 407.2 L164 407.1 L165 407.1 L165 415.3 L166 415.3 L166 415.3 L167 415.3 L167 417.9 L168 417.9 L168 420.1 L169 420.1 L169 411.6 L170 411.6 L170 412.4 L171 412.4 L171 412.1 L172 412.1 L172 414.8 L173 414.8 L173 416.3 L174 416.3 L174 416.8 L175 416.8 L175 415.0 L176 415.0 L176 415.4 L177 415.4 L177 419.9 L178 419.9 L178 418.7 L179 418.7 L179 419.0 L180 419.0 L180 413.1 L181 413.1 L181 409.9 L182 409.9 L182 416.4 L183 416.4 L183 420.4 L184 420.4 L184 414.3 L185 414.3 L185 423.3 L186 423.3 L186 419.2 L187 419.2 L187 422.7 L188 422.7 L188 429.0 L189 429.0 L189 428.6 L190 428.6 L190 426.1 L191 426.1 L191 425.7 L192 425.7 L192 428.1 L193 428.1 L193 433.3 L194 433.3 L194 436.2 L195 436.2 L195 434.4 L196 434.4 L196 434.0 L197 434.0 L197 436.3 L198 436.3 L198 437.5 L199 437.5 L199 436.4 L200 436.4 L200 435.9 L201 435.9 L201 434.0 L202 434.0 L202 438.1 L203 438.1 L203 439.6 L204 439.6 L204 438.5 L205 438.5 L205 430.2 L206 430.2 L206 421.9 L207 421.9 L207 411.9 L208 411.9 L208 416.0 L209 416.0 L209 418.0 L210 418.0 L210 418.0 L211 418.0 L211 413.3 L212 413.3 L212 411.5 L213 411.5 L213 417.3 L214 417.3 L214 408.9 L215 408.9 L215 410.2 L216 410.2 L216 415.2 L217 415.2 L217 417.1 L218 417.1 L218 420.8 L219 420.8 L219 416.2 L220 416.2 L220 418.0 L221 418.0 L221 423.0 L222 423.0 L222 428.1 L223 428.1 L223 419.6 L224 419.6 L224 414.8 L225 414.8 L225 419.4 L226 419.4 L226 416.7 L227 416.7 L227 413.0 L228 413.0 L228 416.9 L229 416.9 L229 410.0 L230 410.0 L230 412.9 L231 412.9 L231 411.3 L232 411.3 L232 407.1 L233 407.1 L233 414.4 L234 414.4 L234 413.6 L235 413.6 L235 413.7 L236 413.7 L236 419.1 L237 419.1 L237 418.7 L238 418.7 L238 411.7 L239 411.7 L239 414.1 L240 414.1 L240 408.2 L241 408.2 L241 408.1 L242 408.1 L242 411.6 L243 411.6 L243 419.2 L244 419.2 L244 422.2 L245 422.2 L245 427.4 L246 427.4 L246 416.7 L247 416.7 L247 418.5 L248 418.5 L248 408.3 L249 408.3 L249 400.7 L250 400.7 L250 399.3 L251 399.3 L251 400.9 L252 400.9 L252 399.7 L253 399.7 L253 403.6 L254 403.6 L254 398.2 L255 398.2 L255 404.9 L256 404.9 L256 405.7 L257 405.7 L257 411.8 L258 411.8 L258 420.1 L259 420.1 L259 417.9 L260 417.9 L260 415.4 L261 415.4 L261 409.7 L262 409.7 L262 412.0 L263 412.0 L263 409.4 L264 409.4 L264 399.3 L265 399.3 L265 395.5 L266 395.5 L266 408.6 L267 408.6 L267 413.5 L268 413.5 L268 409.8 L269 409.8 L269 412.5 L270 412.5 L270 410.3 L271 410.3 L271 413.2 L272 413.2 L272 403.4 L273 403.4 L273 407.1 L274 407.1 L274 406.9 L275 406.9 L275 393.3 L276 393.3 L276 405.5 L277 405.5 L277 401.1 L278 401.1 L278 409.2 L279 409.2 L279 407.1 L280 407.1 L280 410.6 L281 410.6 L281 420.0 L282 420.0 L282 422.6 L283 422.6 L283 420.9 L284 420.9 L284 415.9 L285 415.9 L285 413.4 L286 413.4 L286 404.2 L287 404.2 L287 394.7 L288 394.7 L288 393.9 L289 393.9 L289 396.0 L290 396.0 L290 396.8 L291 396.8 L291 405.8 L292 405.8 L292 399.0 L293 399.0 L293 403.6 L294 403.6 L294 397.5 L295 397.5 L295 401.1 L296 401.1 L296 395.8 L297 395.8 L297 399.4 L298 399.4 L298 408.8 L299 408.8 L299 417.5 L300 417.5 L300 412.8 L301 412.8 L301 414.4 L302 414.4 L302 422.2 L303 422.2 L303 426.2 L304 426.2 L304 419.0 L305 419.0 L305 427.3 L306 427.3 L306 427.5 L307 427.5 L307 425.8 L308 425.8 L308 426.9 L309 426.9 L309 424.7 L310 424.7 L310 422.7 L311 422.7 L311 412.1 L312 412.1 L312 404.1 L313 404.1 L313 407.2 L314 407.2 L314 404.2 L315 404.2 L315 399.1 L316 399.1 L316 403.9 L317 403.9 L317 398.0 L318 398.0 L318 397.6 L319 397.6 L319 400.0 L320 400.0 L320 394.5 L321 394.5 L321 400.3 L322 400.3 L322 391.2 L323 391.2 L323 388.1 L324 388.1 L324 388.6 L325 388.6 L325 401.1 L326 401.1 L326 409.6 L327 409.6 L327 414.4 L328 414.4 L328 407.4 L329 407.4 L329 402.5 L330 402.5 L330 391.9 L331 391.9 L331 403.0 L332 403.0 L332 390.5 L333 390.5 L333 390.5 L334 390.5 L334 386.4 L335 386.4 L335 396.2 L336 396.2 L336 390.5 L337 390.5 L337 399.7 L338 399.7 L338 398.6 L339 398.6 L339 408.0 L340 408.0 L340 398.1 L341 398.1 L341 405.3 L342 405.3 L342 408.0 L343 408.0 L343 402.0 L344 402.0 L344 413.0 L345 413.0 L345 411.2 L346 411.2 L346 412.8 L347 412.8 L347 413.3 L348 413.3 L348 410.8 L349 410.8 L349 409.3 L350 409.3 L350 403.8 L351 403.8 L351 407.8 L352 407.8 L352 411.6 L353 411.6 L353 405.9 L354 405.9 L354 405.5 L355 405.5 L355 408.8 L356 408.8 L356 404.6 L357 404.6 L357 398.1 L358 398.1 L358 401.9 L359 401.9 L359 406.3 L360 406.3 L360 397.5 L361 397.5 L361 386.9 L362 386.9 L362 395.4 L363 395.4 L363 391.4 L364 391.4 L364 401.4 L365 401.4 L365 405.0 L366 405.0 L366 400.1 L367 400.1 L367 404.5 L368 404.5 L368 402.4 L369 402.4 L369 408.9 L370 408.9 L370 405.3 L371 405.3 L371 399.1 L372 399.1 L372 408.1 L373 408.1 L373 409.2 L374 409.2 L374 393.6 L375 393.6 L375 394.5 L376 394.5 L376 401.0 L377 401.0 L377 391.4 L378 391.4 L378 398.6 L379 398.6 L379 408.1 L380 408.1 L380 403.0 L381 403.0 L381 395.6 L382 395.6 L382 408.7 L383 408.7 L383 399.9 L384 399.9 L384 404.5 L385 404.5 L385 398.8 L386 398.8 L386 403.9 L387 403.9 L387 411.9 L388 411.9 L388 414.5 L389 414.5 L389 409.3 L390 409.3 L390 404.8 L391 404.8 L391 405.5 L392 405.5 L392 414.8 L393 414.8 L393 411.0 L394 411.0 L394 412.6 L395 412.6 L395 421.3 L396 421.3 L396 417.9 L397 417.9 L397 419.9 L398 419.9 L398 421.2 L399 421.2 L399 422.7 L400 422.7 L400 426.7 L401 426.7 L401 428.5 L402 428.5 L402 428.5 L403 428.5 L403 431.7 L404 431.7 L404 432.9 L405 432.9 L405 428.2 L406 428.2 L406 430.8 L407 430.8 L407 422.9 L408 422.9 L408 422.9 L409 422.9 L409 420.7 L410 420.7 L410 419.8 L411 419.8 L411 416.3 L412 416.3 L412 414.0 L413 414.0 L413 406.6 L414 406.6 L414 407.0 L415 407.0 L415 404.0 L416 404.0 L416 407.4 L417 407.4 L417 407.7 L418 407.7 L418 408.9 L419 408.9 L419 409.0 L420 409.0 L420 415.2 L421 415.2 L421 415.5 L422 415.5 L422 410.9 L423 410.9 L423 414.4 L424 414.4 L424 422.6 L425 422.6 L425 419.1 L426 419.1 L426 420.1 L427 420.1 L427 412.8 L428 412.8 L428 412.5 L429 412.5 L429 411.9 L430 411.9 L430 407.6 L431 407.6 L431 414.7 L432 414.7 L432 413.9 L433 413.9 L433 407.9 L434 407.9 L434 408.4 L435 408.4 L435 413.7 L436 413.7 L436 416.9 L437 416.9 L437 414.8 L438 414.8 L438 411.6 L439 411.6 L439 409.9 L440 409.9 L440 416.4 L441 416.4 L441 417.4 L442 417.4 L442 421.1 L443 421.1 L443 413.9 L444 413.9 L444 418.6 L445 418.6 L445 417.8 L446 417.8 L446 423.5 L447 423.5 L447 417.2 L448 417.2 L448 417.7 L449 417.7 L449 410.5 L450 410.5 L450 407.3 L451 407.3 L451 403.0 L452 403.0 L452 399.8 L453 399.8 L453 406.6 L454 406.6 L454 403.5 L455 403.5 L455 398.4 L456 398.4 L456 392.9 L457 392.9 L457 406.8 L458 406.8 L458 402.7 L459 402.7 L459 413.7 L460 413.7 L460 412.3 L461 412.3 L461 407.9 L462 407.9 L462 406.3 L463 406.3 L463 411.4 L464 411.4 L464 404.9 L465 404.9 L465 400.3 L466 400.3 L466 400.6 L467 400.6 L467 409.1 L468 409.1 L468 408.1 L469 408.1 L469 408.5 L470 408.5 L470 403.0 L471 403.0 L471 407.8 L472 407.8 L472 409.5 L473 409.5 L473 406.4 L474 406.4 L474 397.6 L475 397.6 L475 400.8 L476 400.8 L476 410.7 L477 410.7 L477 397.1 L478 397.1 L478 408.9 L479 408.9 L479 405.5 L480 405.5 L480 410.1 L481 410.1 L481 409.4 L482 409.4 L482 413.6 L483 413.6 L483 421.0 L484 421.0 L484 413.1 L485 413.1 L485 405.1 L486 405.1 L486 398.1 L487 398.1 L487 391.5 L488 391.5 L488 402.5 L489 402.5 L489 398.5 L490 398.5 L490 403.6 L491 403.6 L491 409.5 L492 409.5 L492 414.7 L493 414.7 L493 406.8 L494 406.8 L494 400.9 L495 400.9 L495 405.2 L496 405.2 L496 394.4 L497 394.4 L497 399.8 L498 399.8 L498 407.0 L499 407.0 L499 404.6 L500 404.6 L500 406.9 L501 406.9 L501 403.8 L502 403.8 L502 413.7 L503 413.7 L503 416.0 L504 416.0 L504 419.8 L505 419.8 L505 418.4 L506 418.4 L506 426.3 L507 426.3 L507 423.8 L508 423.8 L508 419.7 L509 419.7 L509 411.8 L510 411.8 L510 406.2 L511 406.2 L511 401.4 L512 401.4 L512 409.6 L513 409.6 L513 402.7 L514 402.7 L514 403.9 L515 403.9 L515 398.1 L516 398.1 L516 405.3 L517 405.3 L517 405.5 L518 405.5 L518 401.5 L519 401.5 L519 391.4 L520 391.4 L520 394.7 L521 394.7 L521 389.4 L522 389.4 L522 390.6 L523 390.6 L523 379.9 L524 379.9 L524 389.2 L525 389.2 L525 387.0 L526 387.0 L526 395.4 L527 395.4 L527 396.1 L528 396.1 L528 395.6 L529 395.6 L529 397.6 L530 397.6 L530 408.1 L531 408.1 L531 418.2 L532 418.2 L532 420.8 L533 420.8 L533 417.8 L534 417.8 L534 416.9 L535 416.9 L535 408.2 L536 408.2 L536 401.3 L537 401.3 L537 403.7 L538 403.7 L538 396.0 L539 396.0 L539 396.5 L540 396.5 L540 397.2 L541 397.2 L541 405.1 L542 405.1 L542 399.6 L543 399.6 L543 398.3 L544 398.3 L544 409.9 L545 409.9 L545 416.9 L546 416.9 L546 418.8 L547 418.8 L547 419.1 L548 419.1 L548 415.6 L549 415.6 L549 421.4 L550 421.4 L550 416.6 L551 416.6 L551 416.1 L552 416.1 L552 421.6 L553 421.6 L553 415.8 L554 415.8 L554 416.1 L555 416.1 L555 418.0 L556 418.0 L556 402.4 L557 402.4 L557 401.5 L558 401.5 L558 401.7 L559 401.7 L559 400.5 L560 400.5 L560 395.9 L561 395.9 L561 393.0 L562 393.0 L562 394.4 L563 394.4 L563 399.6 L564 399.6 L564 399.1 L565 399.1 L565 389.8 L566 389.8 L566 397.0 L567 397.0 L567 382.1 L568 382.1 L568 397.1 L569 397.1 L569 384.6 L570 384.6 L570 388.3 L571 388.3 L571 389.9 L572 389.9 L572 403.2 L573 403.2 L573 408.5 L574 408.5 L574 404.2 L575 404.2 L575 401.6 L576 401.6 L576 390.5 L577 390.5 L577 387.7 L578 387.7 L578 384.2 L579 384.2 L579 392.1 L580 392.1 L580 392.8 L581 392.8 L581 410.6 L582 410.6 L582 410.1 L583 410.1 L583 406.6 L584 406.6 L584 402.5 L585 402.5 L585 411.7 L586 411.7 L586 407.5 L587 407.5 L587 407.9 L588 407.9 L588 408.6 L589 408.6 L589 406.4 L590 406.4 L590 399.6 L591 399.6 L591 403.9 L592 403.9 L592 406.6 L593 406.6 L593 408.4 L594 408.4 L594 398.9 L595 398.9 L595 403.5 L596 403.5 L596 414.5 L597 414.5 L597 416.5 L598 416.5 L598 417.3 L599 417.3 L599 415.7 L600 415.7 L600 405.0 L601 405.0 L601 403.7 L602 403.7 L602 390.9 L603 390.9 L603 385.3 L604 385.3 L604 382.4 L605 382.4 L605 394.9 L606 394.9 L606 395.7 L607 395.7 L607 391.2 L608 391.2 L608 398.5 L609 398.5 L609 389.7 L610 389.7 L610 390.6 L611 390.6 L611 379.5 L612 379.5 L612 379.9 L613 379.9 L613 388.2 L614 388.2 L614 395.9 L615 395.9 L615 395.2 L616 395.2 L616 398.2 L617 398.2 L617 407.4 L618 407.4 L618 408.8 L619 408.8 L619 405.5 L620 405.5 L620 406.7 L621 406.7 L621 407.4 L622 407.4 L622 405.0 L623 405.0 L623 403.7 L624 403.7 L624 399.4 L625 399.4 L625 409.8 L626 409.8 L626 404.0 L627 404.0 L627 402.1 L628 402.1 L628 409.2 L629 409.2 L629 404.1 L630 404.1 L630 405.3 L631 405.3 L631 415.0 L632 415.0 L632 412.2 L633 412.2 L633 421.0 L634 421.0 L634 420.8 L635 420.8 L635 418.1 L636 418.1 L636 425.9 L637 425.9 L637 425.2 L638 425.2 L638 427.7 L639 427.7 L639 431.8 L640 431.8 L640 432.7 L641 432.7 L641 431.8 L642 431.8 L642 431.5 L643 431.5 L643 432.5 L644 432.5 L644 434.4 L645 434.4 L645 437.2 L646 437.2 L646 435.2 L647 435.2 L647 434.1 L648 434.1 L648 434.0 L649 434.0 L649 434.0 L650 434.0 L650 435.3 L651 435.3 L651 436.6 L652 436.6 L652 440.0 L653 440.0 L653 437.4 L654 437.4 L654 438.7 L655 438.7 L655 440.2 L656 440.2 L656 439.5 L657 439.5 L657 441.0 L658 441.0 L658 442.4 L659 442.4 L659 444.3 L660 444.3 L660 445.0 L661 445.0 L661 444.2 L662 444.2 L662 444.5 L663 444.5 L663 446.7 L664 446.7 L664 446.7 L665 446.7 L665 448.1 L666 448.1 L666 449.3 L667 449.3 L667 449.3 L668 449.3 L668 449.6 L669 449.6 L669 450.6 L670 450.6 L670 451.1 L671 451.1 L671 452.0 L672 452.0 L672 452.1 L673 452.1 L673 452.1 L674 452.1 L674 452.1 L675 452.1 L675 452.1 L676 452.1 L676 452.1 L677 452.1 L677 452.0 L678 452.0 L678 452.1 L679 452.1 L679 452.1 L680 452.1 L680 452.0 L681 452.0 L681 452.1 L682 452.1 L682 452.1 L683 452.1 L683 452.1 L684 452.1 L684 452.1 L685 452.1 L685 453.0 L684 453.0 L684 453.0 L683 453.0 L683 452.9 L682 452.9 L682 453.0 L681 453.0 L681 452.9 L680 452.9 L680 452.9 L679 452.9 L679 453.0 L678 453.0 L678 452.9 L677 452.9 L677 453.0 L676 453.0 L676 452.9 L675 452.9 L675 452.9 L674 452.9 L674 452.9 L673 452.9 L673 452.9 L672 452.9 L672 452.9 L671 452.9 L671 452.9 L670 452.9 L670 453.4 L669 453.4 L669 453.9 L668 453.9 L668 454.3 L667 454.3 L667 455.1 L666 455.1 L666 455.0 L665 455.0 L665 455.7 L664 455.7 L664 456.2 L663 456.2 L663 456.4 L662 456.4 L662 458.4 L661 458.4 L661 457.7 L660 457.7 L660 458.3 L659 458.3 L659 459.6 L658 459.6 L658 459.6 L657 459.6 L657 462.0 L656 462.0 L656 462.0 L655 462.0 L655 462.1 L654 462.1 L654 463.4 L653 463.4 L653 463.6 L652 463.6 L652 462.0 L651 462.0 L651 464.2 L650 464.2 L650 464.6 L649 464.6 L649 463.0 L648 463.0 L648 465.8 L647 465.8 L647 465.4 L646 465.4 L646 467.4 L645 467.4 L645 464.5 L644 464.5 L644 467.8 L643 467.8 L643 467.2 L642 467.2 L642 470.0 L641 470.0 L641 467.5 L640 467.5 L640 469.6 L639 469.6 L639 471.4 L638 471.4 L638 477.2 L637 477.2 L637 478.7 L636 478.7 L636 489.2 L635 489.2 L635 485.9 L634 485.9 L634 487.4 L633 487.4 L633 490.9 L632 490.9 L632 485.3 L631 485.3 L631 489.3 L630 489.3 L630 492.5 L629 492.5 L629 492.5 L628 492.5 L628 488.9 L627 488.9 L627 489.0 L626 489.0 L626 498.2 L625 498.2 L625 501.6 L624 501.6 L624 501.6 L623 501.6 L623 496.7 L622 496.7 L622 494.3 L621 494.3 L621 496.5 L620 496.5 L620 498.7 L619 498.7 L619 502.0 L618 502.0 L618 504.8 L617 504.8 L617 503.1 L616 503.1 L616 517.0 L615 517.0 L615 514.5 L614 514.5 L614 517.9 L613 517.9 L613 509.9 L612 509.9 L612 515.2 L611 515.2 L611 508.3 L610 508.3 L610 519.1 L609 519.1 L609 510.3 L608 510.3 L608 511.8 L607 511.8 L607 507.5 L606 507.5 L606 508.4 L605 508.4 L605 515.3 L604 515.3 L604 500.9 L603 500.9 L603 507.2 L602 507.2 L602 509.9 L601 509.9 L601 503.5 L600 503.5 L600 497.0 L599 497.0 L599 489.5 L598 489.5 L598 485.6 L597 485.6 L597 485.9 L596 485.9 L596 484.5 L595 484.5 L595 492.5 L594 492.5 L594 503.6 L593 503.6 L593 499.1 L592 499.1 L592 501.5 L591 501.5 L591 492.2 L590 492.2 L590 498.5 L589 498.5 L589 493.4 L588 493.4 L588 492.8 L587 492.8 L587 486.9 L586 486.9 L586 489.8 L585 489.8 L585 502.2 L584 502.2 L584 504.1 L583 504.1 L583 506.9 L582 506.9 L582 509.3 L581 509.3 L581 493.7 L580 493.7 L580 491.7 L579 491.7 L579 493.5 L578 493.5 L578 492.4 L577 492.4 L577 501.8 L576 501.8 L576 489.7 L575 489.7 L575 493.6 L574 493.6 L574 496.9 L573 496.9 L573 500.4 L572 500.4 L572 500.0 L571 500.0 L571 510.8 L570 510.8 L570 511.4 L569 511.4 L569 512.5 L568 512.5 L568 509.7 L567 509.7 L567 506.7 L566 506.7 L566 496.8 L565 496.8 L565 499.6 L564 499.6 L564 506.0 L563 506.0 L563 506.6 L562 506.6 L562 507.3 L561 507.3 L561 501.6 L560 501.6 L560 510.1 L559 510.1 L559 495.4 L558 495.4 L558 496.8 L557 496.8 L557 490.8 L556 490.8 L556 491.4 L555 491.4 L555 493.4 L554 493.4 L554 481.7 L553 481.7 L553 485.3 L552 485.3 L552 478.7 L551 478.7 L551 483.2 L550 483.2 L550 492.0 L549 492.0 L549 488.8 L548 488.8 L548 495.6 L547 495.6 L547 499.5 L546 499.5 L546 495.2 L545 495.2 L545 498.7 L544 498.7 L544 498.6 L543 498.6 L543 503.2 L542 503.2 L542 510.9 L541 510.9 L541 500.0 L540 500.0 L540 504.8 L539 504.8 L539 517.0 L538 517.0 L538 507.9 L537 507.9 L537 500.8 L536 500.8 L536 491.1 L535 491.1 L535 487.8 L534 487.8 L534 485.6 L533 485.6 L533 488.8 L532 488.8 L532 487.5 L531 487.5 L531 485.5 L530 485.5 L530 497.6 L529 497.6 L529 506.3 L528 506.3 L528 500.4 L527 500.4 L527 507.3 L526 507.3 L526 509.8 L525 509.8 L525 504.8 L524 504.8 L524 517.8 L523 517.8 L523 513.6 L522 513.6 L522 521.3 L521 521.3 L521 520.8 L520 520.8 L520 516.8 L519 516.8 L519 519.0 L518 519.0 L518 510.1 L517 510.1 L517 515.0 L516 515.0 L516 513.7 L515 513.7 L515 498.9 L514 498.9 L514 502.8 L513 502.8 L513 508.1 L512 508.1 L512 500.1 L511 500.1 L511 487.7 L510 487.7 L510 482.8 L509 482.8 L509 481.1 L508 481.1 L508 482.9 L507 482.9 L507 481.5 L506 481.5 L506 491.4 L505 491.4 L505 489.9 L504 489.9 L504 498.5 L503 498.5 L503 505.8 L502 505.8 L502 511.2 L501 511.2 L501 514.3 L500 514.3 L500 512.7 L499 512.7 L499 511.5 L498 511.5 L498 506.1 L497 506.1 L497 501.1 L496 501.1 L496 503.9 L495 503.9 L495 512.8 L494 512.8 L494 505.1 L493 505.1 L493 514.0 L492 514.0 L492 501.2 L491 501.2 L491 516.3 L490 516.3 L490 508.0 L489 508.0 L489 495.7 L488 495.7 L488 497.9 L487 497.9 L487 488.2 L486 488.2 L486 482.9 L485 482.9 L485 480.9 L484 480.9 L484 484.0 L483 484.0 L483 490.7 L482 490.7 L482 495.5 L481 495.5 L481 492.4 L480 492.4 L480 508.2 L479 508.2 L479 516.5 L478 516.5 L478 513.8 L477 513.8 L477 507.3 L476 507.3 L476 499.8 L475 499.8 L475 496.8 L474 496.8 L474 494.4 L473 494.4 L473 485.8 L472 485.8 L472 482.6 L471 482.6 L471 484.9 L470 484.9 L470 494.6 L469 494.6 L469 490.1 L468 490.1 L468 495.3 L467 495.3 L467 499.6 L466 499.6 L466 506.1 L465 506.1 L465 508.9 L464 508.9 L464 500.9 L463 500.9 L463 496.8 L462 496.8 L462 499.8 L461 499.8 L461 492.2 L460 492.2 L460 489.6 L459 489.6 L459 496.5 L458 496.5 L458 503.3 L457 503.3 L457 508.2 L456 508.2 L456 511.1 L455 511.1 L455 509.0 L454 509.0 L454 497.9 L453 497.9 L453 496.0 L452 496.0 L452 487.1 L451 487.1 L451 488.4 L450 488.4 L450 477.4 L449 477.4 L449 473.0 L448 473.0 L448 472.9 L447 472.9 L447 474.9 L446 474.9 L446 477.0 L445 477.0 L445 481.9 L444 481.9 L444 478.9 L443 478.9 L443 486.3 L442 486.3 L442 488.6 L441 488.6 L441 488.2 L440 488.2 L440 494.1 L439 494.1 L439 491.4 L438 491.4 L438 491.1 L437 491.1 L437 491.8 L436 491.8 L436 497.5 L435 497.5 L435 496.9 L434 496.9 L434 493.6 L433 493.6 L433 494.1 L432 494.1 L432 490.3 L431 490.3 L431 498.1 L430 498.1 L430 494.8 L429 494.8 L429 490.9 L428 490.9 L428 491.3 L427 491.3 L427 482.2 L426 482.2 L426 478.9 L425 478.9 L425 472.0 L424 472.0 L424 473.2 L423 473.2 L423 482.5 L422 482.5 L422 484.4 L421 484.4 L421 488.9 L420 488.9 L420 488.3 L419 488.3 L419 495.1 L418 495.1 L418 491.1 L417 491.1 L417 495.4 L416 495.4 L416 491.2 L415 491.2 L415 490.5 L414 490.5 L414 484.9 L413 484.9 L413 487.7 L412 487.7 L412 487.1 L411 487.1 L411 483.9 L410 483.9 L410 474.6 L409 474.6 L409 474.3 L408 474.3 L408 472.7 L407 472.7 L407 471.6 L406 471.6 L406 472.8 L405 472.8 L405 470.0 L404 470.0 L404 470.6 L403 470.6 L403 470.4 L402 470.4 L402 470.5 L401 470.5 L401 470.7 L400 470.7 L400 467.5 L399 467.5 L399 468.9 L398 468.9 L398 468.7 L397 468.7 L397 474.8 L396 474.8 L396 478.7 L395 478.7 L395 480.3 L394 480.3 L394 484.2 L393 484.2 L393 493.8 L392 493.8 L392 490.8 L391 490.8 L391 489.7 L390 489.7 L390 498.4 L389 498.4 L389 500.5 L388 500.5 L388 492.1 L387 492.1 L387 503.3 L386 503.3 L386 503.3 L385 503.3 L385 501.5 L384 501.5 L384 493.4 L383 493.4 L383 484.7 L382 484.7 L382 480.0 L381 480.0 L381 483.4 L380 483.4 L380 487.0 L379 487.0 L379 497.1 L378 497.1 L378 508.1 L377 508.1 L377 512.6 L376 512.6 L376 507.5 L375 507.5 L375 490.0 L374 490.0 L374 486.5 L373 486.5 L373 483.8 L372 483.8 L372 484.6 L371 484.6 L371 494.0 L370 494.0 L370 487.6 L369 487.6 L369 492.9 L368 492.9 L368 493.5 L367 493.5 L367 500.4 L366 500.4 L366 498.3 L365 498.3 L365 499.4 L364 499.4 L364 502.2 L363 502.2 L363 497.2 L362 497.2 L362 510.4 L361 510.4 L361 507.6 L360 507.6 L360 501.8 L359 501.8 L359 496.1 L358 496.1 L358 500.5 L357 500.5 L357 502.2 L356 502.2 L356 500.4 L355 500.4 L355 498.9 L354 498.9 L354 502.7 L353 502.7 L353 494.8 L352 494.8 L352 490.8 L351 490.8 L351 480.8 L350 480.8 L350 479.0 L349 479.0 L349 479.4 L348 479.4 L348 476.0 L347 476.0 L347 480.1 L346 480.1 L346 480.1 L345 480.1 L345 478.3 L344 478.3 L344 481.1 L343 481.1 L343 486.3 L342 486.3 L342 491.8 L341 491.8 L341 487.3 L340 487.3 L340 498.5 L339 498.5 L339 496.1 L338 496.1 L338 489.8 L337 489.8 L337 496.1 L336 496.1 L336 492.9 L335 492.9 L335 501.2 L334 501.2 L334 500.7 L333 500.7 L333 497.9 L332 497.9 L332 489.5 L331 489.5 L331 491.3 L330 491.3 L330 481.0 L329 481.0 L329 483.1 L328 483.1 L328 484.7 L327 484.7 L327 488.8 L326 488.8 L326 494.3 L325 494.3 L325 502.3 L324 502.3 L324 502.7 L323 502.7 L323 493.7 L322 493.7 L322 502.0 L321 502.0 L321 499.8 L320 499.8 L320 493.8 L319 493.8 L319 490.2 L318 490.2 L318 488.9 L317 488.9 L317 486.1 L316 486.1 L316 482.4 L315 482.4 L315 486.1 L314 486.1 L314 495.8 L313 495.8 L313 502.0 L312 502.0 L312 504.0 L311 504.0 L311 486.8 L310 486.8 L310 484.6 L309 484.6 L309 486.0 L308 486.0 L308 481.2 L307 481.2 L307 473.7 L306 473.7 L306 475.8 L305 475.8 L305 473.1 L304 473.1 L304 475.3 L303 475.3 L303 473.9 L302 473.9 L302 479.0 L301 479.0 L301 477.8 L300 477.8 L300 481.6 L299 481.6 L299 487.4 L298 487.4 L298 484.4 L297 484.4 L297 489.0 L296 489.0 L296 503.2 L295 503.2 L295 502.9 L294 502.9 L294 507.0 L293 507.0 L293 498.6 L292 498.6 L292 497.7 L291 497.7 L291 496.9 L290 496.9 L290 497.2 L289 497.2 L289 496.4 L288 496.4 L288 489.6 L287 489.6 L287 484.3 L286 484.3 L286 488.0 L285 488.0 L285 485.5 L284 485.5 L284 479.0 L283 479.0 L283 479.7 L282 479.7 L282 483.5 L281 483.5 L281 479.2 L280 479.2 L280 486.9 L279 486.9 L279 488.5 L278 488.5 L278 496.7 L277 496.7 L277 491.3 L276 491.3 L276 496.8 L275 496.8 L275 510.9 L274 510.9 L274 505.2 L273 505.2 L273 493.6 L272 493.6 L272 495.9 L271 495.9 L271 496.0 L270 496.0 L270 487.3 L269 487.3 L269 486.8 L268 486.8 L268 488.5 L267 488.5 L267 498.3 L266 498.3 L266 504.8 L265 504.8 L265 503.5 L264 503.5 L264 514.0 L263 514.0 L263 509.1 L262 509.1 L262 500.1 L261 500.1 L261 483.6 L260 483.6 L260 483.8 L259 483.8 L259 488.7 L258 488.7 L258 490.5 L257 490.5 L257 502.7 L256 502.7 L256 501.0 L255 501.0 L255 496.8 L254 496.8 L254 496.8 L253 496.8 L253 496.0 L252 496.0 L252 499.2 L251 499.2 L251 508.1 L250 508.1 L250 508.2 L249 508.2 L249 495.6 L248 495.6 L248 488.2 L247 488.2 L247 478.2 L246 478.2 L246 468.7 L245 468.7 L245 477.0 L244 477.0 L244 477.1 L243 477.1 L243 482.4 L242 482.4 L242 483.2 L241 483.2 L241 484.5 L240 484.5 L240 491.5 L239 491.5 L239 483.7 L238 483.7 L238 483.9 L237 483.9 L237 486.6 L236 486.6 L236 494.5 L235 494.5 L235 484.7 L234 484.7 L234 483.2 L233 483.2 L233 488.4 L232 488.4 L232 488.3 L231 488.3 L231 485.0 L230 485.0 L230 492.1 L229 492.1 L229 493.8 L228 493.8 L228 489.2 L227 489.2 L227 487.3 L226 487.3 L226 481.9 L225 481.9 L225 477.3 L224 477.3 L224 475.0 L223 475.0 L223 472.2 L222 472.2 L222 476.5 L221 476.5 L221 474.9 L220 474.9 L220 480.6 L219 480.6 L219 481.2 L218 481.2 L218 483.4 L217 483.4 L217 489.9 L216 489.9 L216 492.0 L215 492.0 L215 496.7 L214 496.7 L214 491.7 L213 491.7 L213 490.9 L212 490.9 L212 488.2 L211 488.2 L211 484.6 L210 484.6 L210 483.6 L209 483.6 L209 485.1 L208 485.1 L208 488.3 L207 488.3 L207 484.4 L206 484.4 L206 476.8 L205 476.8 L205 474.6 L204 474.6 L204 468.4 L203 468.4 L203 466.5 L202 466.5 L202 468.9 L201 468.9 L201 468.1 L200 468.1 L200 464.5 L199 464.5 L199 466.4 L198 466.4 L198 468.2 L197 468.2 L197 465.2 L196 465.2 L196 465.6 L195 465.6 L195 465.3 L194 465.3 L194 466.5 L193 466.5 L193 467.2 L192 467.2 L192 467.8 L191 467.8 L191 469.2 L190 469.2 L190 476.8 L189 476.8 L189 477.9 L188 477.9 L188 483.1 L187 483.1 L187 484.7 L186 484.7 L186 481.0 L185 481.0 L185 485.6 L184 485.6 L184 483.0 L183 483.0 L183 484.1 L182 484.1 L182 484.2 L181 484.2 L181 487.7 L180 487.7 L180 484.1 L179 484.1 L179 485.8 L178 485.8 L178 491.9 L177 491.9 L177 493.6 L176 493.6 L176 498.7 L175 498.7 L175 490.9 L174 490.9 L174 491.6 L173 491.6 L173 492.5 L172 492.5 L172 493.4 L171 493.4 L171 486.8 L170 486.8 L170 496.7 L169 496.7 L169 490.7 L168 490.7 L168 486.8 L167 486.8 L167 489.9 L166 489.9 L166 483.4 L165 483.4 L165 479.3 L164 479.3 L164 482.3 L163 482.3 L163 484.6 L162 484.6 L162 489.9 L161 489.9 L161 486.2 L160 486.2 L160 494.5 L159 494.5 L159 491.3 L158 491.3 L158 488.7 L157 488.7 L157 491.5 L156 491.5 L156 486.7 L155 486.7 L155 493.8 L154 493.8 L154 484.0 L153 484.0 L153 483.5 L152 483.5 L152 475.9 L151 475.9 L151 469.6 L150 469.6 L150 461.7 L149 461.7 L149 461.2 L148 461.2 L148 465.3 L147 465.3 L147 471.0 L146 471.0 L146 473.6 L145 473.6 L145 478.5 L144 478.5 L144 476.7 L143 476.7 L143 478.6 L142 478.6 L142 479.9 L141 479.9 L141 481.6 L140 481.6 L140 484.6 L139 484.6 L139 483.5 L138 483.5 L138 484.9 L137 484.9 L137 481.3 L136 481.3 L136 486.2 L135 486.2 L135 479.4 L134 479.4 L134 476.2 L133 476.2 L133 479.2 L132 479.2 L132 471.5 L131 471.5 L131 473.2 L130 473.2 L130 470.7 L129 470.7 L129 468.0 L128 468.0 L128 467.7 L127 467.7 L127 464.5 L126 464.5 L126 468.0 L125 468.0 L125 468.9 L124 468.9 L124 473.3 L123 473.3 L123 474.8 L122 474.8 L122 473.0 L121 473.0 L121 477.1 L120 477.1 L120 475.5 L119 475.5 L119 480.9 L118 480.9 L118 480.1 L117 480.1 L117 480.1 L116 480.1 L116 477.5 L115 477.5 L115 480.4 L114 480.4 L114 477.1 L113 477.1 L113 470.4 L112 470.4 L112 468.6 L111 468.6 L111 469.1 L110 469.1 L110 464.4 L109 464.4 L109 459.7 L108 459.7 L108 457.3 L107 457.3 L107 458.2 L106 458.2 L106 459.1 L105 459.1 L105 461.9 L104 461.9 L104 462.1 L103 462.1 L103 462.3 L102 462.3 L102 462.2 L101 462.2 L101 462.5 L100 462.5 L100 463.0 L99 463.0 L99 463.0 L98 463.0 L98 462.9 L97 462.9 L97 465.4 L96 465.4 L96 467.0 L95 467.0 L95 468.5 L94 468.5 L94 468.3 L93 468.3 L93 468.5 L92 468.5 L92 467.0 L91 467.0 L91 469.2 L90 469.2 L90 469.1 L89 469.1 L89 468.9 L88 468.9 L88 470.8 L87 470.8 L87 470.3 L86 470.3 L86 474.1 L85 474.1 L85 479.0 L84 479.0 L84 473.2 L83 473.2 L83 476.5 L82 476.5 L82 476.5 L81 476.5 L81 478.5 L80 478.5 L80 478.6 L79 478.6 L79 483.3 L78 483.3 L78 478.9 L77 478.9 L77 476.8 L76 476.8 L76 473.0 L75 473.0 L75 472.7 L74 472.7 L74 476.0 L73 476.0 L73 473.8 L72 473.8 L72 472.2 L71 472.2 L71 474.7 L70 474.7 L70 478.6 L69 478.6 L69 474.7 L68 474.7 L68 479.5 L67 479.5 L67 480.1 L66 480.1 L66 478.2 L65 478.2 L65 477.2 L64 477.2 L64 478.3 L63 478.3 L63 475.7 L62 475.7 L62 474.0 L61 474.0 L61 481.2 L60 481.2 L60 479.3 L59 479.3 L59 482.3 L58 482.3 L58 482.8 L57 482.8 L57 481.6 L56 481.6 L56 477.3 L55 477.3 L55 477.6 L54 477.6 L54 484.8 L53 484.8 L53 479.8 L52 479.8 L52 485.5 L51 485.5 L51 493.3 L50 493.3 L50 489.9 L49 489.9 L49 483.9 L48 483.9 L48 481.4 L47 481.4 L47 482.2 L46 482.2 L46 478.7 L45 478.7 L45 475.2 L44 475.2 L44 472.1 L43 472.1 L43 476.7 L42 476.7 L42 477.4 L41 477.4 L41 485.7 L40 485.7 L40 487.1 L39 487.1 L39 488.7 L38 488.7 L38 487.1 L37 487.1 L37 485.9 L36 485.9 L36 485.0 L35 485.0 L35 480.3 L34 480.3 L34 477.2 L33 477.2 L33 479.0 L32 479.0 L32 478.6 L31 478.6 L31 483.8 L30 483.8 L30 483.5 L29 483.5 L29 477.2 L28 477.2 L28 480.1 L27 480.1 L27 473.7 L26 473.7 L26 472.0 L25 472.0 L25 473.9 L24 473.9 L24 477.4 L23 477.4 L23 480.8 L22 480.8 L22 482.4 L21 482.4 L21 486.1 L20 486.1 L20 485.5 L19 485.5 L19 486.5 L18 486.5 L18 483.3 L17 483.3 L17 481.6 L16 481.6 L16 477.2 L15 477.2 L15 473.8 L14 473.8 L14 470.8 L13 470.8 L13 468.1 L12 468.1 L12 464.9 L11 464.9 Z" fill="#1bef9f"/><path d="M11.5 464.9 V469.1 M12.5 434.9 V427.9 M12.5 468.1 V475.7 M13.5 433.0 V427.1 M13.5 470.8 V481.0 M14.5 425.3 V418.3 M14.5 473.8 V487.8 M15.5 420.6 V414.6 M17.5 421.7 V413.7 M18.5 486.5 V493.8 M19.5 485.5 V492.0 M20.5 425.0 V413.5 M20.5 486.1 V493.1 M21.5 425.4 V412.7 M21.5 482.4 V489.7 M22.5 480.8 V487.8 M23.5 424.4 V414.9 M24.5 430.9 V422.5 M25.5 426.0 V420.1 M26.5 429.8 V419.1 M26.5 473.7 V489.9 M28.5 426.2 V415.8 M29.5 425.3 V419.6 M29.5 483.5 V488.8 M30.5 420.3 V415.1 M30.5 483.8 V493.7 M31.5 416.9 V408.5 M34.5 421.8 V396.6 M34.5 480.3 V495.4 M36.5 485.9 V499.2 M37.5 417.6 V407.8 M38.5 488.7 V496.3 M39.5 423.2 V406.8 M39.5 487.1 V495.7 M40.5 423.9 V413.3 M40.5 485.7 V493.4 M41.5 426.1 V412.5 M41.5 477.4 V487.5 M44.5 427.9 V415.3 M44.5 475.2 V487.9 M47.5 422.1 V410.5 M48.5 419.4 V413.9 M50.5 416.0 V404.9 M50.5 493.3 V500.6 M51.5 485.5 V500.9 M52.5 420.2 V408.6 M52.5 479.8 V503.3 M53.5 423.3 V404.3 M53.5 484.8 V502.6 M54.5 426.8 V404.9 M54.5 477.6 V500.1 M55.5 477.3 V497.4 M57.5 482.8 V494.2 M60.5 481.2 V496.6 M61.5 474.0 V487.1 M62.5 427.0 V417.5 M63.5 478.3 V490.5 M64.5 427.9 V422.3 M65.5 478.2 V489.5 M66.5 480.1 V487.6 M67.5 432.8 V421.6 M69.5 478.6 V486.8 M70.5 474.7 V487.3 M71.5 430.3 V419.6 M72.5 425.2 V422.0 M72.5 473.8 V485.5 M73.5 426.6 V422.2 M73.5 476.0 V482.5 M74.5 431.5 V422.4 M75.5 473.0 V479.5 M76.5 425.5 V414.8 M76.5 476.8 V487.5 M77.5 421.1 V414.9 M78.5 483.3 V490.9 M79.5 416.6 V411.7 M80.5 423.5 V415.0 M80.5 478.5 V496.1 M81.5 476.5 V493.1 M82.5 476.5 V491.8 M84.5 479.0 V489.0 M85.5 474.1 V491.8 M86.5 431.4 V424.1 M87.5 470.8 V485.4 M88.5 429.4 V427.3 M88.5 468.9 V482.5 M89.5 432.4 V427.3 M89.5 469.1 V475.3 M91.5 437.2 V429.6 M91.5 467.0 V475.1 M92.5 435.3 V428.2 M93.5 434.2 V430.2 M93.5 468.3 V473.3 M94.5 436.1 V430.6 M96.5 437.6 V430.6 M97.5 462.9 V469.1 M99.5 438.7 V434.8 M100.5 440.0 V433.5 M100.5 462.5 V466.6 M101.5 442.8 V432.6 M102.5 441.3 V435.8 M103.5 462.1 V465.7 M105.5 459.1 V464.9 M106.5 445.9 V442.0 M107.5 445.0 V440.2 M107.5 457.3 V461.2 M108.5 441.9 V437.9 M108.5 459.7 V464.5 M110.5 469.1 V478.6 M111.5 429.8 V422.4 M111.5 468.6 V479.2 M112.5 470.4 V488.6 M115.5 477.5 V497.3 M116.5 418.1 V414.1 M116.5 480.1 V495.9 M119.5 428.6 V417.5 M120.5 477.1 V487.4 M121.5 428.8 V422.7 M121.5 473.0 V484.2 M122.5 434.5 V421.6 M123.5 473.3 V482.1 M126.5 435.4 V420.6 M127.5 467.7 V476.0 M128.5 430.6 V424.7 M129.5 470.7 V480.5 M132.5 424.2 V413.2 M133.5 476.2 V491.7 M134.5 479.4 V496.8 M135.5 486.2 V499.3 M136.5 423.1 V401.0 M137.5 426.3 V404.0 M139.5 484.6 V504.2 M140.5 425.0 V418.4 M140.5 481.6 V498.6 M141.5 479.9 V499.7 M143.5 476.7 V493.2 M144.5 426.7 V413.1 M144.5 478.5 V489.2 M146.5 421.9 V411.6 M146.5 471.0 V479.8 M147.5 423.9 V416.1 M147.5 465.3 V484.9 M148.5 432.1 V421.0 M148.5 461.2 V478.8 M150.5 429.5 V414.9 M150.5 469.6 V479.1 M151.5 423.9 V410.9 M152.5 424.7 V412.1 M152.5 483.5 V492.1 M154.5 411.7 V401.5 M154.5 493.8 V498.1 M155.5 486.7 V493.9 M156.5 416.9 V403.2 M159.5 400.3 V388.6 M159.5 494.5 V500.4 M160.5 486.2 V503.9 M161.5 489.9 V501.9 M162.5 408.4 V392.8 M163.5 482.3 V497.3 M164.5 407.1 V398.8 M164.5 479.3 V502.3 M165.5 415.3 V402.0 M165.5 483.4 V504.0 M166.5 489.9 V504.7 M167.5 486.8 V508.5 M168.5 420.1 V403.9 M168.5 490.7 V501.2 M169.5 411.6 V403.2 M170.5 486.8 V503.3 M171.5 412.1 V397.6 M172.5 414.8 V404.9 M172.5 492.5 V505.6 M176.5 415.4 V407.7 M178.5 418.7 V402.5 M179.5 419.0 V404.5 M181.5 409.9 V402.4 M181.5 484.2 V500.7 M182.5 484.1 V491.8 M183.5 483.0 V499.4 M184.5 414.3 V410.3 M186.5 419.2 V411.2 M186.5 484.7 V493.4 M187.5 422.7 V412.6 M187.5 483.1 V490.1 M190.5 426.1 V418.8 M191.5 425.7 V419.3 M191.5 467.8 V475.3 M193.5 433.3 V426.1 M194.5 436.2 V430.9 M196.5 465.2 V476.4 M197.5 468.2 V475.7 M198.5 437.5 V430.2 M198.5 466.4 V472.2 M199.5 464.5 V474.4 M201.5 468.9 V473.5 M202.5 438.1 V431.1 M202.5 466.5 V473.3 M203.5 439.6 V431.6 M204.5 438.5 V431.2 M204.5 474.6 V486.6 M205.5 430.2 V420.5 M205.5 476.8 V488.9 M206.5 484.4 V498.1 M208.5 416.0 V402.3 M208.5 485.1 V506.2 M210.5 484.6 V501.2 M212.5 411.5 V391.3 M212.5 490.9 V508.8 M213.5 491.7 V500.5 M215.5 410.2 V403.1 M216.5 415.2 V406.1 M216.5 489.9 V502.5 M218.5 420.8 V413.8 M218.5 481.2 V500.1 M220.5 418.0 V409.9 M220.5 474.9 V491.6 M221.5 423.0 V411.8 M221.5 476.5 V488.2 M222.5 472.2 V484.6 M224.5 414.8 V406.0 M224.5 477.3 V489.7 M226.5 416.7 V401.3 M227.5 489.2 V499.9 M228.5 493.8 V507.6 M229.5 410.0 V393.0 M229.5 492.1 V508.1 M230.5 412.9 V399.9 M230.5 485.0 V499.7 M231.5 411.3 V390.9 M231.5 488.3 V510.0 M232.5 407.1 V391.5 M234.5 484.7 V510.0 M235.5 413.7 V403.5 M236.5 419.1 V398.8 M238.5 483.7 V496.7 M239.5 414.1 V401.7 M240.5 408.2 V392.7 M241.5 408.1 V393.0 M244.5 422.2 V390.3 M247.5 418.5 V397.8 M247.5 488.2 V501.1 M248.5 408.3 V396.2 M249.5 508.2 V514.7 M250.5 508.1 V515.5 M251.5 400.9 V385.3 M253.5 403.6 V387.7 M253.5 496.8 V518.5 M254.5 496.8 V520.0 M257.5 490.5 V504.6 M258.5 420.1 V400.7 M259.5 417.9 V410.6 M259.5 483.8 V506.8 M260.5 483.6 V509.1 M261.5 409.7 V398.7 M262.5 412.0 V393.9 M262.5 509.1 V513.7 M265.5 504.8 V513.8 M266.5 408.6 V387.8 M266.5 498.3 V515.7 M267.5 488.5 V510.4 M268.5 409.8 V398.7 M269.5 487.3 V504.4 M270.5 496.0 V509.0 M271.5 413.2 V396.7 M272.5 493.6 V516.2 M273.5 407.1 V390.0 M273.5 505.2 V519.4 M274.5 406.9 V384.6 M274.5 510.9 V520.3 M275.5 393.3 V382.1 M276.5 491.3 V504.0 M279.5 407.1 V394.7 M279.5 486.9 V498.0 M281.5 483.5 V497.3 M282.5 422.6 V409.2 M282.5 479.7 V497.3 M284.5 415.9 V400.0 M285.5 413.4 V401.9 M285.5 488.0 V498.2 M286.5 404.2 V391.4 M289.5 497.2 V507.3 M291.5 497.7 V517.0 M296.5 395.8 V390.4 M297.5 399.4 V392.1 M298.5 487.4 V494.4 M299.5 481.6 V486.7 M300.5 477.8 V482.8 M301.5 479.0 V481.6 M302.5 473.9 V479.7 M303.5 475.3 V482.1 M306.5 473.7 V479.1 M307.5 425.8 V420.4 M307.5 481.2 V489.2 M308.5 426.9 V421.7 M309.5 424.7 V419.7 M309.5 484.6 V499.8 M311.5 412.1 V400.6 M311.5 504.0 V521.2 M313.5 407.2 V387.5 M313.5 495.8 V517.2 M314.5 486.1 V507.1 M316.5 403.9 V382.3 M316.5 486.1 V503.9 M318.5 397.6 V376.5 M318.5 490.2 V506.6 M319.5 493.8 V517.1 M320.5 394.5 V379.5 M321.5 400.3 V382.5 M321.5 502.0 V515.4 M322.5 391.2 V380.1 M322.5 493.7 V521.1 M323.5 388.1 V381.2 M323.5 502.7 V516.5 M324.5 502.3 V509.6 M325.5 401.1 V390.2 M325.5 494.3 V514.7 M326.5 409.6 V391.0 M326.5 488.8 V507.4 M329.5 402.5 V393.2 M329.5 481.0 V506.6 M330.5 391.9 V387.3 M332.5 390.5 V379.2 M332.5 497.9 V516.4 M334.5 501.2 V517.3 M335.5 396.2 V389.4 M336.5 390.5 V385.2 M337.5 399.7 V386.4 M337.5 489.8 V510.3 M338.5 398.6 V385.2 M338.5 496.1 V513.9 M339.5 498.5 V512.6 M345.5 411.2 V399.1 M345.5 480.1 V504.1 M347.5 413.3 V406.6 M347.5 476.0 V499.2 M349.5 409.3 V401.4 M349.5 479.0 V489.4 M350.5 403.8 V398.9 M351.5 490.8 V500.2 M352.5 494.8 V507.8 M353.5 405.9 V391.3 M354.5 405.5 V388.9 M355.5 500.4 V517.8 M356.5 404.6 V385.5 M357.5 398.1 V379.6 M358.5 496.1 V510.1 M360.5 507.6 V517.0 M362.5 395.4 V383.0 M363.5 502.2 V512.2 M364.5 499.4 V516.2 M365.5 498.3 V514.8 M366.5 400.1 V387.5 M368.5 492.9 V506.4 M369.5 487.6 V501.4 M371.5 484.6 V504.7 M372.5 408.1 V388.8 M372.5 483.8 V501.8 M374.5 393.6 V377.5 M374.5 490.0 V507.1 M380.5 483.4 V499.6 M381.5 480.0 V504.1 M382.5 408.7 V390.8 M383.5 493.4 V506.1 M388.5 500.5 V509.3 M389.5 409.3 V393.3 M389.5 498.4 V513.4 M391.5 405.5 V399.8 M392.5 414.8 V399.0 M392.5 493.8 V505.9 M393.5 484.2 V493.4 M394.5 480.3 V489.9 M395.5 421.3 V413.3 M395.5 478.7 V487.5 M396.5 417.9 V407.7 M396.5 474.8 V484.4 M397.5 419.9 V411.4 M397.5 468.7 V480.6 M399.5 422.7 V416.0 M403.5 431.7 V417.9 M404.5 432.9 V416.5 M404.5 470.0 V483.7 M406.5 430.8 V418.7 M406.5 471.6 V489.5 M407.5 422.9 V416.3 M408.5 422.9 V413.0 M409.5 420.7 V411.8 M411.5 416.3 V403.9 M411.5 487.1 V502.3 M413.5 406.6 V401.1 M414.5 490.5 V505.0 M415.5 404.0 V394.9 M415.5 491.2 V501.0 M417.5 407.7 V400.4 M417.5 491.1 V507.0 M420.5 488.9 V500.8 M422.5 410.9 V402.2 M423.5 473.2 V489.2 M424.5 422.6 V407.9 M426.5 482.2 V497.7 M427.5 412.8 V398.3 M427.5 491.3 V498.3 M428.5 412.5 V398.5 M430.5 498.1 V510.5 M431.5 414.7 V394.5 M431.5 490.3 V513.5 M432.5 413.9 V391.7 M432.5 494.1 V507.3 M433.5 407.9 V398.7 M434.5 408.4 V392.1 M434.5 496.9 V513.7 M435.5 413.7 V391.9 M435.5 497.5 V515.6 M436.5 491.8 V503.6 M437.5 491.1 V507.1 M438.5 411.6 V397.0 M439.5 409.9 V399.8 M440.5 416.4 V399.9 M440.5 488.2 V509.8 M441.5 488.6 V504.4 M443.5 413.9 V405.5 M443.5 478.9 V501.4 M444.5 418.6 V410.4 M446.5 474.9 V487.7 M447.5 417.2 V410.8 M447.5 472.9 V481.3 M448.5 417.7 V406.6 M448.5 473.0 V485.3 M449.5 410.5 V402.5 M449.5 477.4 V491.9 M450.5 488.4 V500.8 M451.5 487.1 V512.1 M452.5 496.0 V510.5 M454.5 403.5 V385.8 M455.5 398.4 V373.6 M456.5 392.9 V374.0 M457.5 406.8 V385.8 M460.5 412.3 V401.8 M461.5 407.9 V397.0 M462.5 406.3 V393.5 M463.5 411.4 V393.7 M463.5 500.9 V519.2 M464.5 404.9 V388.0 M466.5 400.6 V390.9 M466.5 499.6 V513.2 M467.5 409.1 V390.1 M467.5 495.3 V518.0 M468.5 490.1 V514.3 M469.5 408.5 V399.2 M470.5 484.9 V508.0 M473.5 494.4 V511.5 M475.5 499.8 V517.3 M477.5 397.1 V386.2 M478.5 516.5 V524.8 M479.5 405.5 V391.7 M479.5 508.2 V525.4 M480.5 410.1 V402.9 M481.5 409.4 V400.8 M481.5 495.5 V516.0 M482.5 413.6 V409.2 M483.5 484.0 V500.6 M484.5 480.9 V508.5 M485.5 482.9 V500.0 M486.5 488.2 V515.6 M487.5 391.5 V379.8 M487.5 497.9 V513.8 M489.5 398.5 V381.8 M489.5 508.0 V521.6 M490.5 403.6 V386.7 M490.5 516.3 V521.3 M491.5 409.5 V390.1 M492.5 414.7 V386.9 M492.5 514.0 V520.5 M493.5 406.8 V394.7 M494.5 400.9 V385.3 M494.5 512.8 V519.8 M495.5 503.9 V516.5 M497.5 506.1 V519.9 M499.5 404.6 V384.9 M501.5 403.8 V392.1 M502.5 505.8 V520.1 M504.5 419.8 V401.9 M506.5 481.5 V499.0 M507.5 482.9 V491.1 M508.5 419.7 V406.3 M508.5 481.1 V494.0 M509.5 411.8 V403.9 M510.5 406.2 V397.5 M512.5 409.6 V386.5 M512.5 508.1 V513.0 M513.5 502.8 V520.5 M514.5 403.9 V388.6 M515.5 398.1 V387.9 M515.5 513.7 V523.3 M516.5 405.3 V386.2 M516.5 515.0 V524.2 M518.5 401.5 V388.4 M521.5 389.4 V370.6 M521.5 521.3 V530.5 M523.5 379.9 V367.7 M525.5 387.0 V373.4 M525.5 509.8 V519.4 M526.5 395.4 V381.0 M526.5 507.3 V526.8 M527.5 396.1 V376.4 M527.5 500.4 V514.9 M530.5 408.1 V388.1 M531.5 418.2 V398.6 M531.5 487.5 V503.0 M533.5 417.8 V409.3 M533.5 485.6 V503.0 M534.5 487.8 V510.8 M535.5 491.1 V513.7 M536.5 401.3 V389.1 M539.5 396.5 V381.8 M539.5 504.8 V514.8 M540.5 397.2 V382.3 M540.5 500.0 V524.1 M541.5 405.1 V386.7 M542.5 503.2 V517.1 M543.5 398.3 V391.6 M544.5 498.7 V515.5 M545.5 416.9 V396.5 M545.5 495.2 V508.5 M546.5 499.5 V509.5 M547.5 495.6 V504.8 M548.5 488.8 V499.6 M549.5 492.0 V501.6 M550.5 483.2 V498.9 M552.5 421.6 V408.3 M553.5 415.8 V405.5 M554.5 493.4 V508.6 M555.5 418.0 V403.8 M555.5 491.4 V502.2 M556.5 490.8 V516.3 M559.5 400.5 V383.2 M559.5 510.1 V522.1 M561.5 393.0 V378.7 M562.5 506.6 V518.0 M564.5 399.1 V383.3 M564.5 499.6 V524.5 M565.5 389.8 V375.9 M567.5 382.1 V372.5 M567.5 509.7 V523.8 M568.5 512.5 V523.8 M569.5 511.4 V529.5 M570.5 388.3 V377.8 M570.5 510.8 V522.3 M571.5 389.9 V380.4 M572.5 500.4 V518.4 M573.5 408.5 V378.1 M573.5 496.9 V511.8 M574.5 404.2 V385.7 M575.5 401.6 V378.5 M575.5 489.7 V504.4 M576.5 501.8 V512.8 M577.5 387.7 V375.8 M577.5 492.4 V506.6 M578.5 384.2 V376.2 M579.5 392.1 V381.9 M581.5 410.6 V386.5 M582.5 410.1 V383.2 M582.5 506.9 V521.9 M584.5 402.5 V392.5 M586.5 407.5 V392.7 M586.5 486.9 V508.3 M588.5 408.6 V389.5 M589.5 406.4 V385.0 M590.5 399.6 V384.3 M592.5 406.6 V384.8 M592.5 499.1 V520.5 M593.5 408.4 V389.8 M594.5 492.5 V508.2 M597.5 485.6 V511.5 M599.5 497.0 V515.2 M600.5 405.0 V393.7 M600.5 503.5 V519.8 M601.5 403.7 V385.1 M601.5 509.9 V525.5 M602.5 390.9 V382.5 M602.5 507.2 V530.1 M603.5 385.3 V376.1 M603.5 500.9 V526.5 M604.5 382.4 V373.2 M604.5 515.3 V528.4 M605.5 394.9 V379.3 M606.5 395.7 V382.6 M607.5 391.2 V369.6 M607.5 511.8 V531.9 M608.5 398.5 V376.0 M609.5 389.7 V376.3 M609.5 519.1 V530.5 M610.5 390.6 V380.3 M610.5 508.3 V529.7 M611.5 379.5 V372.7 M611.5 515.2 V526.4 M612.5 379.9 V375.9 M612.5 509.9 V530.6 M613.5 388.2 V378.3 M613.5 517.9 V527.3 M614.5 395.9 V381.0 M614.5 514.5 V525.5 M616.5 503.1 V519.7 M619.5 405.5 V386.8 M620.5 406.7 V388.6 M621.5 407.4 V392.0 M622.5 496.7 V512.4 M623.5 501.6 V514.9 M624.5 501.6 V509.0 M625.5 498.2 V512.3 M626.5 404.0 V395.6 M626.5 489.0 V509.8 M627.5 402.1 V397.0 M628.5 409.2 V397.0 M629.5 404.1 V399.5 M630.5 489.3 V499.4 M631.5 415.0 V395.3 M631.5 485.3 V497.7 M632.5 412.2 V400.2 M632.5 490.9 V496.8 M633.5 421.0 V405.2 M635.5 418.1 V407.0 M635.5 489.2 V493.2 M636.5 425.9 V415.8 M638.5 427.7 V421.8 M638.5 471.4 V484.5 M640.5 432.7 V422.3 M640.5 467.5 V476.0 M641.5 431.8 V425.3 M641.5 470.0 V473.1 M643.5 467.8 V472.6 M644.5 434.4 V429.8 M644.5 464.5 V469.7 M645.5 467.4 V469.6 M646.5 465.4 V468.9 M647.5 434.1 V430.8 M648.5 434.0 V432.7 M650.5 464.2 V466.4 M653.5 463.4 V465.1 M656.5 439.5 V438.1 M656.5 462.0 V463.0 M657.5 441.0 V437.4 M657.5 459.6 V463.1 M658.5 442.4 V439.9 M659.5 444.3 V439.6 M661.5 458.4 V459.8 M663.5 446.7 V444.0 M663.5 456.2 V457.3 M664.5 446.7 V445.2 M664.5 455.7 V457.2 M667.5 449.3 V448.5 M669.5 450.6 V449.9 M669.5 453.4 V453.6 M670.5 451.1 V450.9 M670.5 452.9 V453.0 M671.5 452.0 V451.8 M671.5 452.9 V453.0 M672.5 452.1 V452.0 M672.5 452.9 V453.0 M673.5 452.9 V453.0 M674.5 452.1 V452.0 M674.5 452.9 V452.9 M675.5 452.1 V452.0 M675.5 452.9 V453.0 M677.5 452.0 V452.0 M680.5 452.0 V452.0 M682.5 452.1 V452.0 M682.5 452.9 V453.0 M683.5 453.0 V453.0" stroke="#20c488" stroke-width="1" fill="none"/><path d="M11 173.5 H685 M11 347.5 H685 M11 366.5 H685 M11 540.5 H685" stroke="#66707a" stroke-width="1"/></g><path d="M329.5 164 V548" stroke="#e8e000" stroke-width="1" stroke-dasharray="2 1.6"/><path d="M324.5 159 H335 L329.75 164.5 Z M324.5 553 H335 L329.75 547.5 Z" fill="#f0f000"/><rect x="10" y="355" width="719" height="2" fill="#f0f0f0"/><rect x="685" y="159" width="1.5" height="396" fill="#f4f4f4"/><rect x="10" y="553" width="676" height="2" fill="#f4f4f4"/><path d="M686 166.5 H695 M686 179.5 H695 M686 193.5 H695 M686 206.5 H695 M686 220.5 H695 M686 233.5 H695 M686 247.5 H695 M686 260.5 H695 M686 273.5 H695 M686 287.5 H695 M686 300.5 H695 M686 314.5 H695 M686 327.5 H695 M686 341.5 H695 M686 354.5 H695 M686 173.5 H691 M686 186.5 H691 M686 200.5 H691 M686 213.5 H691 M686 226.5 H691 M686 240.5 H691 M686 253.5 H691 M686 267.5 H691 M686 280.5 H691 M686 294.5 H691 M686 307.5 H691 M686 320.5 H691 M686 334.5 H691 M686 347.5 H691 M686 358.5 H695 M686 372.5 H695 M686 385.5 H695 M686 399.5 H695 M686 412.5 H695 M686 426.5 H695 M686 439.5 H695 M686 452.5 H695 M686 466.5 H695 M686 479.5 H695 M686 493.5 H695 M686 506.5 H695 M686 520.5 H695 M686 533.5 H695 M686 547.5 H695 M686 365.5 H691 M686 379.5 H691 M686 392.5 H691 M686 405.5 H691 M686 419.5 H691 M686 432.5 H691 M686 446.5 H691 M686 459.5 H691 M686 473.5 H691 M686 486.5 H691 M686 500.5 H691 M686 513.5 H691 M686 526.5 H691 M686 540.5 H691 M11.5 555 V561 M19.5 555 V557.5 M27.5 555 V557.5 M36.5 555 V557.5 M44.5 555 V557.5 M53.5 555 V557.5 M61.5 555 V557.5 M70.5 555 V557.5 M78.5 555 V557.5 M86.5 555 V557.5 M95.5 555 V561 M103.5 555 V557.5 M112.5 555 V557.5 M120.5 555 V557.5 M129.5 555 V557.5 M137.5 555 V557.5 M146.5 555 V557.5 M154.5 555 V557.5 M162.5 555 V557.5 M171.5 555 V557.5 M179.5 555 V561 M188.5 555 V557.5 M196.5 555 V557.5 M205.5 555 V557.5 M213.5 555 V557.5 M222.5 555 V557.5 M230.5 555 V557.5 M238.5 555 V557.5 M247.5 555 V557.5 M255.5 555 V557.5 M264.5 555 V561 M272.5 555 V557.5 M281.5 555 V557.5 M289.5 555 V557.5 M298.5 555 V557.5 M306.5 555 V557.5 M314.5 555 V557.5 M323.5 555 V557.5 M331.5 555 V557.5 M340.5 555 V557.5 M348.5 555 V561 M357.5 555 V557.5 M365.5 555 V557.5 M374.5 555 V557.5 M382.5 555 V557.5 M390.5 555 V557.5 M399.5 555 V557.5 M407.5 555 V557.5 M416.5 555 V557.5 M424.5 555 V557.5 M433.5 555 V561 M441.5 555 V557.5 M450.5 555 V557.5 M458.5 555 V557.5 M466.5 555 V557.5 M475.5 555 V557.5 M483.5 555 V557.5 M492.5 555 V557.5 M500.5 555 V557.5 M509.5 555 V557.5 M517.5 555 V561 M526.5 555 V557.5 M534.5 555 V557.5 M542.5 555 V557.5 M551.5 555 V557.5 M559.5 555 V557.5 M568.5 555 V557.5 M576.5 555 V557.5 M585.5 555 V557.5 M593.5 555 V557.5 M602.5 555 V561 M610.5 555 V557.5 M618.5 555 V557.5 M627.5 555 V557.5 M635.5 555 V557.5 M644.5 555 V557.5 M652.5 555 V557.5 M661.5 555 V557.5 M669.5 555 V557.5 M678.5 555 V557.5" stroke="#e4e6e8" stroke-width="1"/></svg><div class="sm" style="left:698px;top:151px">smpl</div><div class="sm" style="left:701px;top:173.4px">30000</div><div class="sm" style="left:701px;top:186.8px">25000</div><div class="sm" style="left:701px;top:200.2px">20000</div><div class="sm" style="left:701px;top:213.7px">15000</div><div class="sm" style="left:701px;top:227.1px">10000</div><div class="sm" style="left:701px;top:240.6px">5000</div><div class="sm" style="left:701px;top:254.0px">0</div><div class="sm" style="left:701px;top:267.4px">5000</div><div class="sm" style="left:701px;top:280.9px">10000</div><div class="sm" style="left:701px;top:294.3px">15000</div><div class="sm" style="left:701px;top:307.8px">20000</div><div class="sm" style="left:701px;top:321.2px">25000</div><div class="sm" style="left:701px;top:334.6px">30000</div><div class="sm" style="left:701px;top:365.9px">30000</div><div class="sm" style="left:701px;top:379.3px">25000</div><div class="sm" style="left:701px;top:392.7px">20000</div><div class="sm" style="left:701px;top:406.2px">15000</div><div class="sm" style="left:701px;top:419.6px">10000</div><div class="sm" style="left:701px;top:433.1px">5000</div><div class="sm" style="left:701px;top:446.5px">0</div><div class="sm" style="left:701px;top:459.9px">5000</div><div class="sm" style="left:701px;top:473.4px">10000</div><div class="sm" style="left:701px;top:486.8px">15000</div><div class="sm" style="left:701px;top:500.3px">20000</div><div class="sm" style="left:701px;top:513.7px">25000</div><div class="sm" style="left:701px;top:527.1px">30000</div><div class="sm" style="left:12px;top:563px">hms</div><div class="sm" style="left:65.3px;width:60px;text-align:center;top:563px">0:25.0</div><div class="sm" style="left:149.7px;width:60px;text-align:center;top:563px">0:50.0</div><div class="sm" style="left:234.2px;width:60px;text-align:center;top:563px">1:15.0</div><div class="sm" style="left:318.6px;width:60px;text-align:center;top:563px">1:40.0</div><div class="sm" style="left:403.1px;width:60px;text-align:center;top:563px">2:05.0</div><div class="sm" style="left:487.5px;width:60px;text-align:center;top:563px">2:30.0</div><div class="sm" style="left:571.9px;width:60px;text-align:center;top:563px">2:55.0</div><div class="a" style="left:11px;top:584px;width:722px;height:30px;background:#545d66;box-shadow:0 0 0 1px #3c434a"></div><div class="a" style="left:14px;top:587px;width:715px;height:10px;background:#000"></div><div class="a" style="left:14px;top:600px;width:715px;height:11px;background:#000"></div><div class="a" style="left:5px;top:620px;width:890px;height:1px;background:#3b4248"></div><div class="a" style="left:0;top:621px;width:900px;height:21px;background:#4f5861"></div><div class="st" style="left:9px">MPEG 1.0 layer-3: 44,100 kHz; Stereo;</div><div class="st" style="left:261px">Total time: 00:03:19</div><div class="st" style="left:369px">View: 00:00:00 / 00:03:19</div><div class="st" style="left:513px">Selection: 00:01:34 / 00:01:34</div><div class="a" style="left:749px;top:149px;width:40px;height:18px;background:linear-gradient(#b8d0e0,#d8e8f2 60%,#e8f2f8);box-shadow:inset 0 0 0 1px #dfeaf2"></div><div class="a" style="left:789px;top:149px;width:41px;height:18px;background:#48515a;box-shadow:inset 0 0 0 1px #555f68"></div><div class="a" style="left:749px;top:151px;width:40px;text-align:center;font-size:11px;letter-spacing:-0.55px;color:#111;line-height:14px">Control</div><div class="a" style="left:789px;top:151px;width:41px;text-align:center;font-size:11px;letter-spacing:-0.55px;color:#e8ecf0;line-height:14px">Effects</div><div class="a" style="left:740px;top:166px;width:154px;height:1px;background:#3b4248"></div><div class="lbl" style="left:749px;top:175.5px">PLAY</div><div class="dd" style="left:750px;top:188px;width:138px"><div style="width:120px;overflow:hidden">Speakers (Realtek AC97 Au</div></div><svg class="a" style="left:878px;top:195px" width="8" height="5"><path d="M0 0.5 H7 L3.5 4Z" fill="#111"/></svg><div class="lbl" style="left:749px;top:212.0px">VOLUME</div><div class="dd" style="left:750px;top:224px;width:138px"><div style="width:120px;overflow:hidden">Master Volume</div></div><svg class="a" style="left:878px;top:231px" width="8" height="5"><path d="M0 0.5 H7 L3.5 4Z" fill="#111"/></svg><div class="a" style="left:750px;top:249px;font-size:11px;font-weight:bold;color:#f0f0f0;line-height:10px">-</div><div class="a" style="left:881px;top:248px;font-size:12px;font-weight:bold;color:#f0f0f0;line-height:12px">+</div><div class="a" style="left:780px;width:80px;text-align:center;top:250px;font-size:8px;color:#e4e8ec;line-height:12px">100 %</div><div class="a" style="left:750px;top:264px;width:140px;height:8px;border-radius:3px;background:linear-gradient(#3e454c,#5a636b);box-shadow:inset 0 0 0 1px #394047"></div><div class="a" style="left:883px;top:262px;width:7px;height:12px;border-radius:2px;background:linear-gradient(#b8bcc0,#8a9096);box-shadow:0 0 0 1px #3a4046"></div><div class="a" style="left:750px;top:286px;width:11px;height:11px;background:linear-gradient(#e8e8e8,#fafafa);box-shadow:inset 0 0 0 1px #c8c8c8"></div><svg class="a" style="left:750px;top:285px" width="12" height="12"><path d="M2.5 6 L5 9.5 L9.5 1.5" fill="none" stroke="#2a3a90" stroke-width="1.6"/></svg><div class="lbl" style="left:767px;top:289.0px">SELECT</div><div class="a" style="left:741px;top:313px;width:151px;height:1px;background:#3b4248"></div><div class="lbl" style="left:749px;top:322.6px">RECORD</div><div class="dd" style="left:750px;top:334px;width:138px"><div style="width:120px;overflow:hidden">Stereo Mix (Realtek AC97 A</div></div><svg class="a" style="left:878px;top:341px" width="8" height="5"><path d="M0 0.5 H7 L3.5 4Z" fill="#111"/></svg><div class="lbl" style="left:749px;top:358.5px">INPUT SOURCE</div><div class="dd" style="left:750px;top:370px;width:138px"><div style="width:120px;overflow:hidden">Master Volume</div></div><svg class="a" style="left:878px;top:377px" width="8" height="5"><path d="M0 0.5 H7 L3.5 4Z" fill="#111"/></svg><div class="a" style="left:750px;top:395px;font-size:11px;font-weight:bold;color:#f0f0f0;line-height:10px">-</div><div class="a" style="left:881px;top:394px;font-size:12px;font-weight:bold;color:#f0f0f0;line-height:12px">+</div><div class="a" style="left:780px;width:80px;text-align:center;top:396px;font-size:8px;color:#e4e8ec;line-height:12px">72 %</div><div class="a" style="left:750px;top:410px;width:140px;height:8px;border-radius:3px;background:linear-gradient(#3e454c,#5a636b);box-shadow:inset 0 0 0 1px #394047"></div><div class="a" style="left:846px;top:408px;width:7px;height:12px;border-radius:2px;background:linear-gradient(#b8bcc0,#8a9096);box-shadow:0 0 0 1px #3a4046"></div><div class="a" style="left:741px;top:459px;width:151px;height:1px;background:#3b4248"></div><div class="lbl" style="left:749px;top:468.0px">ZOOM</div><div class="lbl" style="left:749px;top:478.0px">HORIZONTAL</div><div class="lbl" style="left:843px;top:478.0px">VERTICAL</div><div class="a" style="left:750px;top:490px;width:23px;height:17px;background:#fff;box-shadow:inset 0 0 0 1px #7a98b8;font-size:11px;letter-spacing:-0.9px;color:#111;line-height:17px;padding-left:3px">0</div><svg class="a" style="left:774px;top:490px" width="15" height="8.5"><rect x="0.5" y="0.5" width="14" height="7.5" fill="#e4e4e4" stroke="#b0b0b0" stroke-width="1"/><path d="M3.5 5.5 H10.5 L7 2Z" fill="#111"/></svg><svg class="a" style="left:774px;top:498.5px" width="15" height="8.5"><rect x="0.5" y="0.5" width="14" height="7.5" fill="#e4e4e4" stroke="#b0b0b0" stroke-width="1"/><path d="M3.5 2.5 H10.5 L7 6Z" fill="#111"/></svg><div class="a" style="left:794px;top:490px;width:24px;height:17px;background:#fff;box-shadow:inset 0 0 0 1px #7a98b8;font-size:11px;letter-spacing:-0.9px;color:#111;line-height:17px;padding-left:3px">100</div><svg class="a" style="left:819px;top:490px" width="15" height="8.5"><rect x="0.5" y="0.5" width="14" height="7.5" fill="#e4e4e4" stroke="#b0b0b0" stroke-width="1"/><path d="M3.5 5.5 H10.5 L7 2Z" fill="#111"/></svg><svg class="a" style="left:819px;top:498.5px" width="15" height="8.5"><rect x="0.5" y="0.5" width="14" height="7.5" fill="#e4e4e4" stroke="#b0b0b0" stroke-width="1"/><path d="M3.5 2.5 H10.5 L7 6Z" fill="#111"/></svg><div class="a" style="left:843px;top:490px;width:24px;height:17px;background:#fff;box-shadow:inset 0 0 0 1px #7a98b8;font-size:11px;letter-spacing:-0.9px;color:#111;line-height:17px;padding-left:3px">100</div><svg class="a" style="left:868px;top:490px" width="15" height="8.5"><rect x="0.5" y="0.5" width="14" height="7.5" fill="#e4e4e4" stroke="#b0b0b0" stroke-width="1"/><path d="M3.5 5.5 H10.5 L7 2Z" fill="#111"/></svg><svg class="a" style="left:868px;top:498.5px" width="15" height="8.5"><rect x="0.5" y="0.5" width="14" height="7.5" fill="#e4e4e4" stroke="#b0b0b0" stroke-width="1"/><path d="M3.5 2.5 H10.5 L7 6Z" fill="#111"/></svg><div class="lbl" style="left:749px;top:518.0px">SELECTION</div><div class="a" style="left:750px;top:530px;width:23px;height:17px;background:#fff;box-shadow:inset 0 0 0 1px #7a98b8;font-size:11px;letter-spacing:-0.9px;color:#111;line-height:17px;padding-left:3px">47</div><svg class="a" style="left:774px;top:530px" width="15" height="8.5"><rect x="0.5" y="0.5" width="14" height="7.5" fill="#e4e4e4" stroke="#b0b0b0" stroke-width="1"/><path d="M3.5 5.5 H10.5 L7 2Z" fill="#111"/></svg><svg class="a" style="left:774px;top:538.5px" width="15" height="8.5"><rect x="0.5" y="0.5" width="14" height="7.5" fill="#e4e4e4" stroke="#b0b0b0" stroke-width="1"/><path d="M3.5 2.5 H10.5 L7 6Z" fill="#111"/></svg><div class="a" style="left:794px;top:530px;width:24px;height:17px;background:#fff;box-shadow:inset 0 0 0 1px #7a98b8;font-size:11px;letter-spacing:-0.9px;color:#111;line-height:17px;padding-left:3px">47</div><svg class="a" style="left:819px;top:530px" width="15" height="8.5"><rect x="0.5" y="0.5" width="14" height="7.5" fill="#e4e4e4" stroke="#b0b0b0" stroke-width="1"/><path d="M3.5 5.5 H10.5 L7 2Z" fill="#111"/></svg><svg class="a" style="left:819px;top:538.5px" width="15" height="8.5"><rect x="0.5" y="0.5" width="14" height="7.5" fill="#e4e4e4" stroke="#b0b0b0" stroke-width="1"/><path d="M3.5 2.5 H10.5 L7 6Z" fill="#111"/></svg><div class="a" style="left:750px;top:561px;width:11px;height:11px;background:linear-gradient(#d0d0d0,#f0f0f0);box-shadow:inset 0 0 0 1px #b8b8b8"></div><div class="lbl" style="left:767px;top:564.0px">SELECT</div><div class="a" style="left:0;top:0;width:1px;height:642px;background:#6a737a"></div><div class="a" style="left:1px;top:20px;width:1px;height:622px;background:#3a4248"></div><div class="a" style="left:898px;top:20px;width:1px;height:622px;background:#3a4248"></div><div class="a" style="left:899px;top:0;width:1px;height:642px;background:#6a737a"></div><div class="a" style="left:0;top:641px;width:900px;height:1px;background:#3a4248"></div></div></body></html>
